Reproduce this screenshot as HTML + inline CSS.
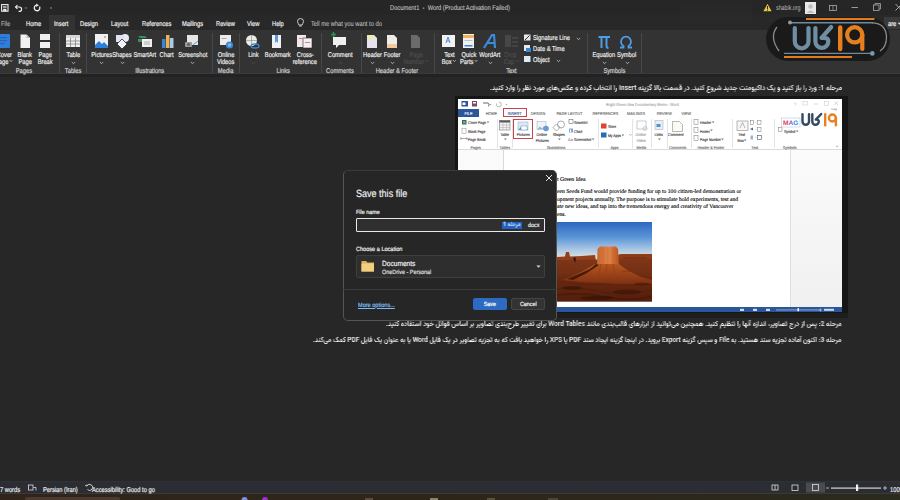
<!DOCTYPE html>
<html><head><meta charset="utf-8">
<style>
*{margin:0;padding:0;box-sizing:border-box}
html,body{text-rendering:geometricPrecision;width:900px;height:500px;overflow:hidden;background:#272727;font-family:"Liberation Sans",sans-serif;color:#e6e6e6}
.a{position:absolute}
svg{position:absolute;overflow:visible}
.t{position:absolute;white-space:nowrap;font-size:7px;line-height:8px;color:#ececec;-webkit-text-stroke:.2px currentColor;transform:scaleX(.82);transform-origin:0 0}
.c{position:absolute;width:60px;text-align:center;white-space:nowrap;font-size:7px;line-height:8px;color:#ececec;-webkit-text-stroke:.2px currentColor}
.c span{display:inline-block;transform:scaleX(.82)}
.g{color:#d0d0d0}
.dis{color:#4c4c4c}
.sep{position:absolute;top:33px;width:1px;height:40px;background:#474747}

</style></head><body>
<div class="a" style="left:0;top:0;width:900px;height:15px;background:#262626"></div>
<div class="a" style="left:0;top:15px;width:900px;height:15px;background:#282828"></div>
<div class="a" style="left:0;top:30px;width:900px;height:43px;background:#333"></div>
<div class="a" style="left:0;top:73px;width:900px;height:1px;background:#3a3a3a"></div>
<div class="a" style="left:0;top:74px;width:900px;height:3px;background:#222"></div>
<div class="a" style="left:0;top:77px;width:900px;height:404px;background:#272727"></div>
<div class="a" style="left:680px;top:3px;width:72px;height:18px;background:rgba(255,255,255,.012)"></div><!-- ghost -->
<!-- QAT -->
<svg style="left:0;top:0" width="60" height="15">
 <rect x="1.6" y="4.6" width="6.4" height="6.6" fill="none" stroke="#eee" stroke-width="1.1"/>
 <rect x="3" y="6.4" width="3.6" height="1.2" fill="#eee"/>
 <rect x="3.2" y="8.8" width="3.2" height="2.4" fill="#eee"/>
 <path d="M15.8 7 h3.6 a2.2 2.2 0 0 1 0 4.4 h-0.8" fill="none" stroke="#eee" stroke-width="1.2"/>
 <path d="M17.4 5.2 L15.6 7 L17.4 8.8" fill="none" stroke="#eee" stroke-width="1.2"/>
 <ellipse cx="26" cy="8" rx="1.6" ry="0.9" fill="#555"/>
 <path d="M39.5 6.6 A2.8 2.8 0 1 1 36.6 5.2" fill="none" stroke="#eee" stroke-width="1.3"/>
 <path d="M36.2 3.5 L38.9 5.2 L36.2 6.9z" fill="#eee"/>
 <ellipse cx="51" cy="8" rx="0.9" ry="1.1" fill="#777"/>
</svg>
<div class="t" style="left:390px;top:5.3px;color:#c4c4c4;-webkit-text-stroke:.1px currentColor">Document1&nbsp; - &nbsp;Word (Product Activation Failed)</div>
<!-- right of title bar -->
<svg style="left:760px;top:0" width="140" height="15">
 <path d="M7.5 3.8 L11.6 11.2 H3.4 Z" fill="#e9c24a"/>
 <rect x="7" y="6" width="1" height="3" fill="#3a2a00"/>
 <rect x="7" y="9.6" width="1" height="1" fill="#3a2a00"/>
 <rect x="45" y="2" width="11" height="12" fill="#e8e8e8"/>
 <circle cx="50.5" cy="6.5" r="2.2" fill="#bdbdbd"/>
 <path d="M46.5 13 q4 -5 8 0z" fill="#bdbdbd"/>
 <rect x="69.5" y="5.5" width="7" height="5" fill="none" stroke="#a8a8a8" stroke-width="0.8"/>
 <line x1="73" y1="5.5" x2="73" y2="10.5" stroke="#a8a8a8" stroke-width="0.7"/>
 <line x1="91.5" y1="7.5" x2="98" y2="7.5" stroke="#a8a8a8" stroke-width="0.9"/>
 <rect x="113.5" y="5" width="5.5" height="5.5" fill="none" stroke="#a8a8a8" stroke-width="0.8"/>
 <path d="M115 5 v-1.5 h5.5 v5.5 h-1.5" fill="none" stroke="#a8a8a8" stroke-width="0.8"/>
 <path d="M135.5 4 l6.5 6.5 M142 4 l-6.5 6.5" stroke="#b8b8b8" stroke-width="0.9"/>
</svg>
<div class="t" style="left:776px;top:4.8px;color:#bdbdbd;-webkit-text-stroke:0;transform:scaleX(.76)">shabik.org</div>
<!-- tabs -->
<div class="a" style="left:49px;top:15px;width:26px;height:15px;background:#333"></div>
<div class="t" style="left:1px;top:20.6px;color:#a0a0a0">File</div>
<div class="t" style="left:26px;top:20.6px">Home</div>
<div class="t" style="left:54px;top:20.6px">Insert</div>
<div class="t" style="left:80px;top:20.6px">Design</div>
<div class="t" style="left:111px;top:20.6px">Layout</div>
<div class="t" style="left:142px;top:20.6px">References</div>
<div class="t" style="left:182px;top:20.6px">Mailings</div>
<div class="t" style="left:216px;top:20.6px">Review</div>
<div class="t" style="left:247px;top:20.6px">View</div>
<div class="t" style="left:272px;top:20.6px">Help</div>
<svg style="left:295px;top:15px" width="12" height="15">
 <path d="M5.5 3.5 a3 3 0 0 1 3 3 c0 1.5 -1.2 2 -1.4 3.5 h-3.2 c-0.2 -1.5 -1.4 -2 -1.4 -3.5 a3 3 0 0 1 3 -3z" fill="none" stroke="#ddd" stroke-width="0.9"/>
 <line x1="4.2" y1="11" x2="6.8" y2="11" stroke="#ddd" stroke-width="0.9"/>
</svg>
<div class="t" style="left:311px;top:20.6px;color:#bdbdbd;-webkit-text-stroke:.1px currentColor">Tell me what you want to do</div>
<!-- share button remnant -->
<div class="a" style="left:884px;top:17px;width:16px;height:12px;background:#3a3a3a"></div>
<div class="t" style="left:888px;top:20.6px;color:#f0f0f0">are</div><svg style="left:897px;top:22px" width="5" height="4"><path d="M0.5 0.8 h4 l-2 2z" fill="#e0e0e0"/></svg>
<div class="sep" style="left:59px"></div>
<div class="sep" style="left:86px"></div>
<div class="sep" style="left:212px"></div>
<div class="sep" style="left:239px"></div>
<div class="sep" style="left:321px"></div>
<div class="sep" style="left:361px"></div>
<div class="sep" style="left:434px"></div>
<div class="sep" style="left:587px"></div>
<div class="sep" style="left:641px"></div>
<div class="c " style="left:-26px;top:51.8px"><span>Cover</span></div>
<div class="c " style="left:-26px;top:58.8px"><span>Page<svg width="5" height="4" style="position:static;display:inline-block;vertical-align:1px;margin-left:1px"><path d="M0.8 1 L2.5 2.7 L4.2 1" stroke="#c8c8c8" fill="none" stroke-width="0.8"/></svg></span></div>
<div class="c " style="left:-5px;top:51.8px"><span>Blank</span></div>
<div class="c " style="left:-5px;top:58.8px"><span>Page</span></div>
<div class="c " style="left:15px;top:51.8px"><span>Page</span></div>
<div class="c " style="left:15px;top:58.8px"><span>Break</span></div>
<div class="c g" style="left:-6px;top:68.2px"><span>Pages</span></div>
<div class="c " style="left:43px;top:51.8px"><span>Table</span></div>
<svg style="left:70.5px;top:61.3px" width="5" height="4"><path d="M0.8 1 L2.5 2.7 L4.2 1" stroke="#c8c8c8" fill="none" stroke-width="0.8"/></svg>
<div class="c g" style="left:43px;top:68.2px"><span>Tables</span></div>
<div class="c " style="left:71.5px;top:51.8px"><span>Pictures</span></div>
<svg style="left:99.0px;top:61.3px" width="5" height="4"><path d="M0.8 1 L2.5 2.7 L4.2 1" stroke="#c8c8c8" fill="none" stroke-width="0.8"/></svg>
<div class="c " style="left:92px;top:51.8px"><span>Shapes</span></div>
<svg style="left:119.5px;top:61.3px" width="5" height="4"><path d="M0.8 1 L2.5 2.7 L4.2 1" stroke="#c8c8c8" fill="none" stroke-width="0.8"/></svg>
<div class="c " style="left:115px;top:51.8px"><span>SmartArt</span></div>
<div class="c " style="left:137px;top:51.8px"><span>Chart</span></div>
<div class="c " style="left:162.5px;top:51.8px"><span>Screenshot</span></div>
<svg style="left:190.0px;top:61.3px" width="5" height="4"><path d="M0.8 1 L2.5 2.7 L4.2 1" stroke="#c8c8c8" fill="none" stroke-width="0.8"/></svg>
<div class="c g" style="left:120px;top:68.2px"><span>Illustrations</span></div>
<div class="c " style="left:196px;top:51.8px"><span>Online</span></div>
<div class="c " style="left:196px;top:58.8px"><span>Videos</span></div>
<div class="c g" style="left:196px;top:68.2px"><span>Media</span></div>
<div class="c " style="left:223px;top:51.8px"><span>Link</span></div>
<svg style="left:250.5px;top:61.3px" width="5" height="4"><path d="M0.8 1 L2.5 2.7 L4.2 1" stroke="#4c4c4c" fill="none" stroke-width="0.8"/></svg>
<div class="c " style="left:247.5px;top:51.8px"><span>Bookmark</span></div>
<div class="c " style="left:275px;top:51.8px"><span>Cross-</span></div>
<div class="c " style="left:275px;top:58.8px"><span>reference</span></div>
<div class="c g" style="left:253px;top:68.2px"><span>Links</span></div>
<div class="c " style="left:310px;top:51.8px"><span>Comment</span></div>
<svg style="left:337.5px;top:61.3px" width="5" height="4"><path d="M0.8 1 L2.5 2.7 L4.2 1" stroke="#4c4c4c" fill="none" stroke-width="0.8"/></svg>
<div class="c g" style="left:310px;top:68.2px"><span>Comments</span></div>
<div class="c " style="left:342px;top:51.8px"><span>Header</span></div>
<svg style="left:369.5px;top:61.3px" width="5" height="4"><path d="M0.8 1 L2.5 2.7 L4.2 1" stroke="#c8c8c8" fill="none" stroke-width="0.8"/></svg>
<div class="c " style="left:362px;top:51.8px"><span>Footer</span></div>
<svg style="left:389.5px;top:61.3px" width="5" height="4"><path d="M0.8 1 L2.5 2.7 L4.2 1" stroke="#c8c8c8" fill="none" stroke-width="0.8"/></svg>
<div class="c dis" style="left:386px;top:51.8px"><span>Page</span></div>
<div class="c dis" style="left:386px;top:58.8px"><span>Number<svg width="5" height="4" style="position:static;display:inline-block;vertical-align:1px;margin-left:1px"><path d="M0.8 1 L2.5 2.7 L4.2 1" stroke="#4c4c4c" fill="none" stroke-width="0.8"/></svg></span></div>
<div class="c g" style="left:367px;top:68.2px"><span>Header &amp; Footer</span></div>
<div class="c " style="left:419px;top:51.8px"><span>Text</span></div>
<div class="c " style="left:419px;top:58.8px"><span>Box<svg width="5" height="4" style="position:static;display:inline-block;vertical-align:1px;margin-left:1px"><path d="M0.8 1 L2.5 2.7 L4.2 1" stroke="#c8c8c8" fill="none" stroke-width="0.8"/></svg></span></div>
<div class="c " style="left:439px;top:51.8px"><span>Quick</span></div>
<div class="c " style="left:439px;top:58.8px"><span>Parts<svg width="5" height="4" style="position:static;display:inline-block;vertical-align:1px;margin-left:1px"><path d="M0.8 1 L2.5 2.7 L4.2 1" stroke="#c8c8c8" fill="none" stroke-width="0.8"/></svg></span></div>
<div class="c " style="left:460px;top:51.8px"><span>WordArt</span></div>
<svg style="left:487.5px;top:61.3px" width="5" height="4"><path d="M0.8 1 L2.5 2.7 L4.2 1" stroke="#c8c8c8" fill="none" stroke-width="0.8"/></svg>
<div class="c dis" style="left:481px;top:51.8px"><span>Drop</span></div>
<div class="c dis" style="left:481px;top:58.8px"><span>Cap<svg width="5" height="4" style="position:static;display:inline-block;vertical-align:1px;margin-left:1px"><path d="M0.8 1 L2.5 2.7 L4.2 1" stroke="#4c4c4c" fill="none" stroke-width="0.8"/></svg></span></div>
<div class="c g" style="left:481.5px;top:68.2px"><span>Text</span></div>
<div class="c " style="left:574px;top:51.8px"><span>Equation</span></div>
<svg style="left:601.5px;top:61.3px" width="5" height="4"><path d="M0.8 1 L2.5 2.7 L4.2 1" stroke="#c8c8c8" fill="none" stroke-width="0.8"/></svg>
<div class="c " style="left:597px;top:51.8px"><span>Symbol</span></div>
<svg style="left:624.5px;top:61.3px" width="5" height="4"><path d="M0.8 1 L2.5 2.7 L4.2 1" stroke="#c8c8c8" fill="none" stroke-width="0.8"/></svg>
<div class="c g" style="left:584px;top:68.2px"><span>Symbols</span></div>
<div class="t" style="left:533px;top:35px">Signature Line</div>
<div class="t" style="left:533px;top:46px">Date &amp; Time</div>
<div class="t" style="left:533px;top:57px">Object</div>
<svg style="left:575.5px;top:37px" width="5" height="4"><path d="M0.8 1 L2.5 2.7 L4.2 1" stroke="#c8c8c8" fill="none" stroke-width="0.8"/></svg>
<svg style="left:555.5px;top:59px" width="5" height="4"><path d="M0.8 1 L2.5 2.7 L4.2 1" stroke="#c8c8c8" fill="none" stroke-width="0.8"/></svg>

<svg style="left:0;top:0" width="650" height="75">
 <!-- cover page -->
 <rect x="-4" y="34" width="14" height="14" rx="1" fill="#2f7fd8"/>
 <rect x="-2" y="37" width="9" height="1.2" fill="#2a64b8"/>
 <rect x="-2" y="40" width="9" height="1.2" fill="#2a64b8"/>
 <rect x="-2" y="43" width="7" height="1.2" fill="#2a64b8"/>
 <!-- blank page -->
 <path d="M20.5 34.5 h6 l3.5 3.5 v10 h-9.5z" fill="#f2f2f2"/>
 <path d="M26.5 34.5 v3.5 h3.5" fill="#bdbdbd"/>
 <!-- page break -->
 <rect x="40" y="34" width="10" height="6" fill="#f0f0f0"/>
 <rect x="40" y="42" width="10" height="6" fill="#f0f0f0"/>
 <!-- table -->
 <rect x="66" y="35" width="14" height="12" fill="#efefef"/>
 <rect x="66" y="35" width="14" height="3" fill="#d6d6d6"/>
 <path d="M66 41 h14 M66 44 h14 M70.5 38 v9 M75.5 38 v9" stroke="#777" stroke-width="0.7"/>
 <!-- pictures -->
 <rect x="95" y="34" width="13" height="14" fill="#eef2f5"/>
 <path d="M95 48 v-3 l4 -4 l3 3 l2 -2 l4 4 v2z" fill="#2f7fd8"/>
 <circle cx="105" cy="37" r="1" fill="#e88b6a"/>
 <!-- shapes -->
 <circle cx="125" cy="38" r="4" fill="#eaeaf5"/>
 <rect x="116" y="35" width="8" height="7" fill="#dfe2f4"/>
 <path d="M122 39 l5 5 l-5 5 l-5 -5z" fill="#f2f2fa" stroke="#2e2e2e" stroke-width="0.8"/>
 <!-- smartart -->
 <path d="M138 36 h7 l2 2 h-7z" fill="#3c8e63"/>
 <path d="M138 39 h4 v3 h-4z" fill="#3c8e63"/>
 <rect x="142" y="39" width="10" height="8" fill="#f0f0f0"/>
 <rect x="144" y="41" width="6" height="4" fill="#cfcfcf"/>
 <!-- chart -->
 <rect x="162" y="39" width="3.5" height="9" fill="#3a86d4"/>
 <rect x="166" y="35" width="3.5" height="13" fill="#e8b455"/>
 <rect x="170" y="38" width="3.5" height="10" fill="#a9c9e8"/>
 <!-- screenshot -->
 <rect x="187" y="35" width="11" height="10" fill="#e6e6e6"/>
 <path d="M193 45 l5 -4" stroke="#2f7fd8" stroke-width="0.8"/>
 <rect x="185" y="42" width="7" height="5" rx="0.8" fill="#9a9a9a"/>
 <circle cx="188.5" cy="44.5" r="1.3" fill="#555"/>
 <!-- online videos -->
 <rect x="220" y="35" width="11" height="10" fill="#ececec"/>
 <rect x="221.5" y="38" width="5" height="1" fill="#aaa"/>
 <circle cx="229.5" cy="45" r="3.6" fill="#3a86d4"/>
 <circle cx="229.5" cy="45" r="1.8" fill="#7fb4ea"/>
 <!-- link -->
 <circle cx="251.5" cy="40.5" r="5.5" fill="#ecebe6"/>
 <path d="M246 40.5 h11 M251.5 35 v11" stroke="#8a8a8a" stroke-width="0.6"/>
 <ellipse cx="255" cy="46" rx="4" ry="2" fill="none" stroke="#3a86d4" stroke-width="1.3"/>
 <!-- bookmark -->
 <rect x="272" y="35" width="9" height="13" fill="#eef2f6"/>
 <path d="M275 35 v8 l1.5 -1.5 l1.5 1.5 v-8z" fill="#5f9ad8"/>
 <!-- cross reference -->
 <rect x="297" y="35" width="9" height="12" fill="#f3e7ee"/>
 <rect x="303" y="38" width="9" height="10" fill="#f6eef2" stroke="#2e2e2e" stroke-width="0.6"/>
 <rect x="299" y="38" width="5" height="1" fill="#c9829f"/>
 <rect x="305" y="42" width="5" height="1" fill="#c9829f"/>
 <!-- comment -->
 <path d="M333 37 h13 v8 h-7 l-3 3 v-3 h-3z" fill="#f0f0f0"/>
 <path d="M331 34.5 h5 M333.5 32 v5" stroke="#2f8d5c" stroke-width="1.6"/>
 <!-- header -->
 <path d="M367 35 h7 l3 3 v10 h-10z" fill="#e7e4ee"/>
 <rect x="367" y="35" width="7" height="4" fill="#efe8b0"/>
 <!-- footer -->
 <path d="M387 35 h7 l3 3 v10 h-10z" fill="#f0ece8"/>
 <rect x="387" y="44" width="10" height="4" fill="#f0c99e"/>
 <!-- page number disabled -->
 <path d="M411 35 h6 l3 3 v10 h-9z" fill="#6b6b6b"/>
 <!-- text box -->
 <rect x="442" y="35" width="13" height="12" fill="#f2f2f2"/>
 <path d="M446 43 l2 -6 l2 6 M446.8 41 h2.4" stroke="#3a86d4" stroke-width="0.9" fill="none"/>
 <!-- quick parts -->
 <rect x="463" y="34" width="11" height="14" fill="#f2f2f2"/>
 <rect x="463" y="35" width="11" height="3" fill="#f0b45a"/>
 <rect x="464.5" y="40" width="8" height="1" fill="#c0c0c0"/>
 <rect x="464.5" y="45" width="8" height="1.5" fill="#3a86d4"/>
 <!-- wordart -->
 <path d="M484 48 l8 -13 l2 0 l1 13 M487 43 h7" stroke="#3e8ad8" stroke-width="2.2" fill="none"/>
 <!-- drop cap disabled -->
 <rect x="505" y="35" width="6" height="12" fill="#474747"/>
 <rect x="512" y="37" width="6" height="2" fill="#444"/><rect x="512" y="41" width="6" height="2" fill="#444"/><rect x="512" y="45" width="6" height="2" fill="#444"/>
 <!-- small buttons icons -->
 <rect x="524" y="34.5" width="6.5" height="6" fill="#e8e8e8"/>
 <path d="M525 40 l4.5 -4.5" stroke="#2e2e2e" stroke-width="1"/>
 <rect x="524" y="45" width="6" height="6" fill="#e8e8e8"/>
 <rect x="526" y="48" width="5" height="4" fill="#3a86d4"/>
 <rect x="524" y="56" width="6.5" height="6" fill="#dfeaf5"/>
 <!-- pi -->
 <path d="M598.5 37 h11.5 M601.5 37 v11 M606.5 37 v9 q0 2 2 2" stroke="#4d9de8" stroke-width="2" fill="none"/>
 <!-- omega -->
 <path d="M620 47.5 h3.5 v-1.5 a5 5 0 1 1 5 0 v1.5 h3.5" stroke="#4d9de8" stroke-width="1.8" fill="none"/>
</svg>
<svg style="left:760px;top:12px" width="140" height="56">
 <rect x="6" y="5" width="124" height="44" rx="22" fill="#1a1a1a"/>
 <path d="M17 15 Q9 25 19 39" fill="none" stroke="#8c8c8c" stroke-width="1.3"/>
 <path d="M112 10.8 Q126 11 126.5 25 Q126.5 35 120 39" fill="none" stroke="#8a8a8a" stroke-width="1.3"/>
 <line x1="46" y1="7" x2="114.5" y2="7" stroke="#e07b22" stroke-width="2"/>
 <line x1="30" y1="10.8" x2="113" y2="10.8" stroke="#6c8ba0" stroke-width="1.4"/>
 <circle cx="30" cy="10.5" r="2" fill="#8d9aa3"/>
 <line x1="24" y1="41.4" x2="112" y2="41.4" stroke="#6c8ba0" stroke-width="1.4"/>
 <circle cx="112.3" cy="41.4" r="2.3" fill="#7d98aa"/>
 <line x1="24" y1="45" x2="92" y2="45" stroke="#e07b22" stroke-width="2"/>
 <path d="M34.8 16 V29.5 A6.85 6.85 0 0 0 48.5 29.5 V16" fill="none" stroke="#6f8ea3" stroke-width="4.2" stroke-linecap="round"/>
 <path d="M55.4 16 V29.5 A6.45 6.45 0 0 0 68.3 29.5 Q68.3 25.2 61.5 25.9 L71.2 15" fill="none" stroke="#6f8ea3" stroke-width="4.2" stroke-linecap="round" stroke-linejoin="round"/>
 <path d="M80.2 15.5 V37" fill="none" stroke="#e6801e" stroke-width="4.4" stroke-linecap="round"/>
 <circle cx="94.7" cy="22.8" r="7.6" fill="none" stroke="#e6801e" stroke-width="4.2"/>
 <path d="M102.3 22.8 V37" fill="none" stroke="#e6801e" stroke-width="4.2" stroke-linecap="round"/>
</svg>
<div class='a' style='left:490px;top:82px;width:352px;height:12px;color:#fafafa'><svg width='352' height='12' viewBox='0 0 391 12' preserveAspectRatio='none' style='display:block'><path fill='currentColor' fill-opacity='0.25' d='M177 2h1v1h-1zM210 2h3v1h-3zM12 3h1v1h-1zM22 3h1v1h-1zM31 3h1v1h-1zM40 3h1v1h-1zM42 3h1v1h-1zM44 3h1v1h-1zM68 3h1v1h-1zM85 3h1v1h-1zM88 3h1v1h-1zM110 3h1v1h-1zM121 3h1v1h-1zM125 3h1v1h-1zM132 3h2v1h-2zM137 3h1v1h-1zM143 3h1v1h-1zM160 3h1v1h-1zM183 3h2v1h-2zM210 3h1v1h-1zM212 3h1v1h-1zM238 3h1v1h-1zM297 3h1v1h-1zM311 3h1v1h-1zM314 3h1v1h-1zM334 3h1v1h-1zM337 3h1v1h-1zM341 3h1v1h-1zM349 3h1v1h-1zM367 3h1v1h-1zM379 3h1v1h-1zM9 4h1v1h-1zM13 4h1v1h-1zM17 4h1v1h-1zM22 4h1v1h-1zM31 4h1v1h-1zM40 4h2v1h-2zM48 4h1v1h-1zM68 4h1v1h-1zM72 4h2v1h-2zM84 4h1v1h-1zM101 4h1v1h-1zM104 4h1v1h-1zM109 4h1v1h-1zM111 4h1v1h-1zM121 4h1v1h-1zM125 4h1v1h-1zM131 4h3v1h-3zM137 4h1v1h-1zM143 4h1v1h-1zM149 4h1v1h-1zM153 4h1v1h-1zM167 4h1v1h-1zM170 4h1v1h-1zM174 4h1v1h-1zM178 4h1v1h-1zM184 4h1v1h-1zM194 4h1v1h-1zM210 4h1v1h-1zM220 4h1v1h-1zM227 4h2v1h-2zM234 4h1v1h-1zM241 4h1v1h-1zM244 4h1v1h-1zM253 4h1v1h-1zM268 4h1v1h-1zM281 4h1v1h-1zM296 4h1v1h-1zM304 4h1v1h-1zM310 4h1v1h-1zM331 4h1v1h-1zM333 4h1v1h-1zM341 4h1v1h-1zM349 4h1v1h-1zM354 4h1v1h-1zM367 4h1v1h-1zM375 4h1v1h-1zM379 4h1v1h-1zM5 5h1v1h-1zM7 5h2v1h-2zM10 5h1v1h-1zM14 5h1v1h-1zM22 5h1v1h-1zM24 5h1v1h-1zM27 5h1v1h-1zM31 5h1v1h-1zM44 5h2v1h-2zM56 5h1v1h-1zM60 5h1v1h-1zM65 5h1v1h-1zM68 5h1v1h-1zM70 5h1v1h-1zM81 5h3v1h-3zM87 5h1v1h-1zM97 5h1v1h-1zM100 5h1v1h-1zM112 5h1v1h-1zM121 5h1v1h-1zM123 5h1v1h-1zM127 5h1v1h-1zM130 5h1v1h-1zM133 5h1v1h-1zM137 5h1v1h-1zM143 5h1v1h-1zM147 5h1v1h-1zM149 5h1v1h-1zM152 5h1v1h-1zM160 5h1v1h-1zM169 5h2v1h-2zM173 5h1v1h-1zM175 5h1v1h-1zM179 5h1v1h-1zM182 5h1v1h-1zM184 5h1v1h-1zM192 5h2v1h-2zM198 5h1v1h-1zM200 5h1v1h-1zM205 5h4v1h-4zM213 5h1v1h-1zM219 5h1v1h-1zM221 5h1v1h-1zM227 5h1v1h-1zM231 5h1v1h-1zM233 5h3v1h-3zM243 5h1v1h-1zM245 5h1v1h-1zM252 5h1v1h-1zM254 5h2v1h-2zM262 5h1v1h-1zM264 5h2v1h-2zM273 5h1v1h-1zM282 5h1v1h-1zM285 5h1v1h-1zM287 5h1v1h-1zM290 5h1v1h-1zM295 5h1v1h-1zM299 5h1v1h-1zM303 5h1v1h-1zM305 5h1v1h-1zM307 5h1v1h-1zM313 5h1v1h-1zM319 5h1v1h-1zM327 5h1v1h-1zM330 5h1v1h-1zM332 5h1v1h-1zM336 5h1v1h-1zM340 5h2v1h-2zM344 5h2v1h-2zM349 5h1v1h-1zM362 5h1v1h-1zM368 5h1v1h-1zM379 5h1v1h-1zM383 5h1v1h-1zM9 6h1v1h-1zM11 6h1v1h-1zM20 6h1v1h-1zM22 6h1v1h-1zM31 6h1v1h-1zM33 6h1v1h-1zM36 6h1v1h-1zM38 6h1v1h-1zM41 6h1v1h-1zM43 6h1v1h-1zM51 6h1v1h-1zM64 6h1v1h-1zM66 6h1v1h-1zM68 6h1v1h-1zM70 6h1v1h-1zM84 6h1v1h-1zM86 6h1v1h-1zM88 6h1v1h-1zM90 6h2v1h-2zM94 6h1v1h-1zM101 6h1v1h-1zM103 6h1v1h-1zM105 6h1v1h-1zM107 6h1v1h-1zM116 6h1v1h-1zM121 6h1v1h-1zM123 6h2v1h-2zM128 6h2v1h-2zM137 6h1v1h-1zM139 6h1v1h-1zM143 6h1v1h-1zM147 6h1v1h-1zM149 6h2v1h-2zM157 6h1v1h-1zM160 6h1v1h-1zM164 6h1v1h-1zM166 6h1v1h-1zM173 6h2v1h-2zM190 6h1v1h-1zM197 6h1v1h-1zM199 6h1v1h-1zM201 6h1v1h-1zM203 6h1v1h-1zM209 6h2v1h-2zM213 6h1v1h-1zM216 6h1v1h-1zM229 6h2v1h-2zM236 6h1v1h-1zM248 6h2v1h-2zM257 6h1v1h-1zM267 6h1v1h-1zM269 6h2v1h-2zM278 6h1v1h-1zM283 6h2v1h-2zM286 6h1v1h-1zM288 6h1v1h-1zM293 6h1v1h-1zM296 6h1v1h-1zM298 6h1v1h-1zM307 6h1v1h-1zM312 6h1v1h-1zM315 6h1v1h-1zM322 6h1v1h-1zM329 6h1v1h-1zM331 6h1v1h-1zM333 6h1v1h-1zM335 6h1v1h-1zM343 6h1v1h-1zM349 6h2v1h-2zM357 6h1v1h-1zM368 6h1v1h-1zM373 6h1v1h-1zM377 6h1v1h-1zM379 6h2v1h-2zM384 6h1v1h-1zM387 6h1v1h-1zM389 6h1v1h-1zM14 7h1v1h-1zM22 7h1v1h-1zM24 7h1v1h-1zM31 7h1v1h-1zM36 7h1v1h-1zM45 7h1v1h-1zM53 7h1v1h-1zM60 7h1v1h-1zM64 7h1v1h-1zM68 7h1v1h-1zM75 7h1v1h-1zM92 7h1v1h-1zM103 7h1v1h-1zM107 7h1v1h-1zM112 7h1v1h-1zM115 7h1v1h-1zM121 7h1v1h-1zM133 7h1v1h-1zM137 7h1v1h-1zM139 7h1v1h-1zM143 7h1v1h-1zM147 7h1v1h-1zM149 7h1v1h-1zM153 7h1v1h-1zM174 7h1v1h-1zM179 7h1v1h-1zM185 7h2v1h-2zM213 7h1v1h-1zM216 7h1v1h-1zM221 7h1v1h-1zM225 7h1v1h-1zM248 7h2v1h-2zM273 7h1v1h-1zM277 7h1v1h-1zM290 7h1v1h-1zM305 7h1v1h-1zM322 7h1v1h-1zM345 7h1v1h-1zM349 7h2v1h-2zM359 7h1v1h-1zM368 7h1v1h-1zM373 7h1v1h-1zM6 8h2v1h-2zM20 8h1v1h-1zM22 8h1v1h-1zM25 8h1v1h-1zM27 8h1v1h-1zM33 8h1v1h-1zM51 8h1v1h-1zM53 8h1v1h-1zM64 8h1v1h-1zM66 8h1v1h-1zM75 8h1v1h-1zM77 8h1v1h-1zM80 8h1v1h-1zM118 8h1v1h-1zM170 8h3v1h-3zM188 8h1v1h-1zM229 8h3v1h-3zM240 8h1v1h-1zM242 8h1v1h-1zM246 8h1v1h-1zM248 8h1v1h-1zM263 8h2v1h-2zM272 8h1v1h-1zM291 8h1v1h-1zM294 8h2v1h-2zM314 8h3v1h-3zM320 8h1v1h-1zM328 8h2v1h-2zM341 8h1v1h-1zM344 8h1v1h-1zM357 8h1v1h-1zM359 8h1v1h-1zM386 8h1v1h-1zM19 9h1v1h-1zM21 9h1v1h-1zM24 9h1v1h-1zM26 9h1v1h-1zM35 9h1v1h-1zM37 9h1v1h-1zM50 9h1v1h-1zM52 9h1v1h-1zM63 9h1v1h-1zM67 9h1v1h-1zM76 9h1v1h-1zM106 9h1v1h-1zM108 9h1v1h-1zM117 9h2v1h-2zM138 9h1v1h-1zM140 9h1v1h-1zM170 9h1v1h-1zM175 9h1v1h-1zM188 9h2v1h-2zM229 9h1v1h-1zM231 9h1v1h-1zM247 9h1v1h-1zM271 9h2v1h-2zM290 9h1v1h-1zM293 9h1v1h-1zM295 9h1v1h-1zM314 9h1v1h-1zM316 9h1v1h-1zM321 9h1v1h-1zM330 9h1v1h-1zM343 9h2v1h-2zM356 9h1v1h-1zM358 9h1v1h-1z'/><path fill='currentColor' fill-opacity='0.50' d='M178 2h2v1h-2zM30 3h1v1h-1zM41 3h1v1h-1zM69 3h1v1h-1zM138 3h1v1h-1zM177 3h1v1h-1zM182 3h1v1h-1zM186 3h2v1h-2zM211 3h1v1h-1zM236 3h1v1h-1zM254 3h1v1h-1zM300 3h2v1h-2zM348 3h1v1h-1zM4 4h1v1h-1zM10 4h2v1h-2zM18 4h1v1h-1zM30 4h1v1h-1zM44 4h1v1h-1zM49 4h1v1h-1zM69 4h1v1h-1zM86 4h1v1h-1zM105 4h1v1h-1zM128 4h3v1h-3zM138 4h1v1h-1zM145 4h1v1h-1zM156 4h2v1h-2zM162 4h1v1h-1zM169 4h1v1h-1zM175 4h2v1h-2zM182 4h2v1h-2zM186 4h2v1h-2zM195 4h2v1h-2zM219 4h1v1h-1zM233 4h1v1h-1zM236 4h1v1h-1zM254 4h2v1h-2zM261 4h1v1h-1zM267 4h1v1h-1zM279 4h2v1h-2zM284 4h2v1h-2zM298 4h1v1h-1zM300 4h2v1h-2zM303 4h1v1h-1zM312 4h1v1h-1zM326 4h1v1h-1zM332 4h1v1h-1zM335 4h1v1h-1zM340 4h1v1h-1zM348 4h1v1h-1zM355 4h1v1h-1zM368 4h1v1h-1zM4 5h1v1h-1zM12 5h1v1h-1zM18 5h1v1h-1zM30 5h1v1h-1zM49 5h1v1h-1zM54 5h1v1h-1zM69 5h1v1h-1zM74 5h1v1h-1zM85 5h1v1h-1zM89 5h1v1h-1zM95 5h1v1h-1zM102 5h1v1h-1zM106 5h1v1h-1zM110 5h1v1h-1zM115 5h1v1h-1zM120 5h1v1h-1zM126 5h1v1h-1zM132 5h1v1h-1zM138 5h1v1h-1zM145 5h1v1h-1zM151 5h1v1h-1zM153 5h1v1h-1zM157 5h1v1h-1zM165 5h1v1h-1zM172 5h1v1h-1zM177 5h1v1h-1zM186 5h2v1h-2zM189 5h1v1h-1zM202 5h1v1h-1zM210 5h2v1h-2zM228 5h1v1h-1zM237 5h1v1h-1zM241 5h2v1h-2zM247 5h1v1h-1zM256 5h1v1h-1zM261 5h1v1h-1zM267 5h2v1h-2zM270 5h1v1h-1zM272 5h1v1h-1zM277 5h1v1h-1zM289 5h1v1h-1zM297 5h1v1h-1zM300 5h2v1h-2zM308 5h1v1h-1zM311 5h1v1h-1zM316 5h1v1h-1zM321 5h1v1h-1zM326 5h1v1h-1zM334 5h1v1h-1zM348 5h1v1h-1zM355 5h1v1h-1zM360 5h1v1h-1zM365 5h2v1h-2zM374 5h1v1h-1zM376 5h1v1h-1zM382 5h1v1h-1zM388 5h1v1h-1zM390 5h1v1h-1zM4 6h1v1h-1zM7 6h2v1h-2zM13 6h2v1h-2zM24 6h4v1h-4zM30 6h1v1h-1zM32 6h1v1h-1zM44 6h2v1h-2zM53 6h1v1h-1zM55 6h3v1h-3zM59 6h2v1h-2zM63 6h1v1h-1zM72 6h2v1h-2zM75 6h2v1h-2zM79 6h5v1h-5zM96 6h2v1h-2zM111 6h2v1h-2zM130 6h1v1h-1zM132 6h2v1h-2zM138 6h1v1h-1zM145 6h1v1h-1zM151 6h1v1h-1zM153 6h2v1h-2zM169 6h2v1h-2zM178 6h2v1h-2zM184 6h4v1h-4zM192 6h2v1h-2zM204 6h5v1h-5zM217 6h1v1h-1zM220 6h2v1h-2zM233 6h2v1h-2zM241 6h2v1h-2zM245 6h2v1h-2zM250 6h1v1h-1zM252 6h4v1h-4zM261 6h1v1h-1zM264 6h2v1h-2zM272 6h1v1h-1zM274 6h1v1h-1zM290 6h3v1h-3zM299 6h3v1h-3zM304 6h2v1h-2zM319 6h2v1h-2zM326 6h1v1h-1zM330 6h1v1h-1zM336 6h1v1h-1zM340 6h2v1h-2zM344 6h2v1h-2zM348 6h1v1h-1zM351 6h1v1h-1zM359 6h1v1h-1zM361 6h2v1h-2zM375 6h2v1h-2zM385 6h2v1h-2zM0 7h3v1h-3zM19 7h1v1h-1zM21 7h1v1h-1zM27 7h1v1h-1zM30 7h1v1h-1zM32 7h2v1h-2zM50 7h1v1h-1zM52 7h1v1h-1zM67 7h1v1h-1zM79 7h1v1h-1zM106 7h1v1h-1zM126 7h1v1h-1zM138 7h1v1h-1zM145 7h1v1h-1zM157 7h1v1h-1zM162 7h1v1h-1zM217 7h2v1h-2zM241 7h1v1h-1zM244 7h2v1h-2zM259 7h1v1h-1zM265 7h1v1h-1zM299 7h4v1h-4zM308 7h1v1h-1zM316 7h1v1h-1zM319 7h1v1h-1zM324 7h1v1h-1zM336 7h1v1h-1zM340 7h2v1h-2zM348 7h1v1h-1zM351 7h1v1h-1zM356 7h1v1h-1zM358 7h1v1h-1zM365 7h2v1h-2zM382 7h1v1h-1zM385 7h1v1h-1zM390 7h1v1h-1zM36 8h1v1h-1zM55 8h2v1h-2zM79 8h1v1h-1zM96 8h2v1h-2zM107 8h1v1h-1zM139 8h1v1h-1zM174 8h1v1h-1zM216 8h2v1h-2zM249 8h2v1h-2zM293 8h1v1h-1zM350 8h2v1h-2zM361 8h2v1h-2zM6 9h2v1h-2zM32 9h1v1h-1zM55 9h1v1h-1zM96 9h1v1h-1zM171 9h3v1h-3zM215 9h2v1h-2zM230 9h1v1h-1zM240 9h2v1h-2zM245 9h1v1h-1zM248 9h2v1h-2zM263 9h2v1h-2zM292 9h1v1h-1zM294 9h1v1h-1zM315 9h1v1h-1zM319 9h1v1h-1zM328 9h2v1h-2zM340 9h1v1h-1zM349 9h2v1h-2zM361 9h1v1h-1zM385 9h1v1h-1zM241 10h1v1h-1zM244 10h1v1h-1z'/><path fill='currentColor' fill-opacity='0.75' d='M13 3h2v1h-2zM23 3h1v1h-1zM39 3h1v1h-1zM86 3h2v1h-2zM111 3h2v1h-2zM122 3h1v1h-1zM134 3h1v1h-1zM144 3h1v1h-1zM161 3h1v1h-1zM178 3h2v1h-2zM185 3h1v1h-1zM237 3h1v1h-1zM298 3h2v1h-2zM312 3h2v1h-2zM335 3h2v1h-2zM342 3h1v1h-1zM368 3h2v1h-2zM378 3h1v1h-1zM12 4h1v1h-1zM23 4h1v1h-1zM39 4h1v1h-1zM85 4h1v1h-1zM110 4h1v1h-1zM122 4h1v1h-1zM134 4h1v1h-1zM144 4h1v1h-1zM146 4h3v1h-3zM150 4h3v1h-3zM154 4h2v1h-2zM159 4h2v1h-2zM177 4h1v1h-1zM185 4h1v1h-1zM212 4h1v1h-1zM235 4h1v1h-1zM242 4h2v1h-2zM297 4h1v1h-1zM311 4h1v1h-1zM334 4h1v1h-1zM342 4h1v1h-1zM369 4h1v1h-1zM378 4h1v1h-1zM13 5h1v1h-1zM19 5h1v1h-1zM23 5h1v1h-1zM25 5h2v1h-2zM39 5h2v1h-2zM42 5h1v1h-1zM50 5h1v1h-1zM55 5h1v1h-1zM58 5h2v1h-2zM66 5h2v1h-2zM71 5h1v1h-1zM86 5h1v1h-1zM91 5h1v1h-1zM96 5h1v1h-1zM105 5h1v1h-1zM111 5h1v1h-1zM122 5h1v1h-1zM124 5h2v1h-2zM134 5h1v1h-1zM144 5h1v1h-1zM146 5h1v1h-1zM148 5h1v1h-1zM150 5h1v1h-1zM154 5h3v1h-3zM158 5h1v1h-1zM161 5h1v1h-1zM166 5h2v1h-2zM178 5h1v1h-1zM183 5h1v1h-1zM185 5h1v1h-1zM212 5h1v1h-1zM220 5h1v1h-1zM236 5h1v1h-1zM246 5h1v1h-1zM271 5h1v1h-1zM291 5h2v1h-2zM298 5h1v1h-1zM304 5h1v1h-1zM312 5h1v1h-1zM320 5h1v1h-1zM335 5h1v1h-1zM342 5h1v1h-1zM356 5h1v1h-1zM361 5h1v1h-1zM369 5h1v1h-1zM378 5h1v1h-1zM380 5h2v1h-2zM5 6h1v1h-1zM10 6h1v1h-1zM19 6h1v1h-1zM21 6h1v1h-1zM23 6h1v1h-1zM37 6h1v1h-1zM39 6h2v1h-2zM42 6h1v1h-1zM50 6h1v1h-1zM52 6h1v1h-1zM54 6h1v1h-1zM58 6h1v1h-1zM65 6h1v1h-1zM69 6h1v1h-1zM71 6h1v1h-1zM74 6h1v1h-1zM87 6h1v1h-1zM89 6h1v1h-1zM95 6h1v1h-1zM100 6h1v1h-1zM102 6h1v1h-1zM106 6h1v1h-1zM108 6h1v1h-1zM115 6h1v1h-1zM120 6h1v1h-1zM122 6h1v1h-1zM126 6h1v1h-1zM134 6h1v1h-1zM140 6h1v1h-1zM144 6h1v1h-1zM146 6h1v1h-1zM148 6h1v1h-1zM152 6h1v1h-1zM158 6h1v1h-1zM161 6h1v1h-1zM165 6h1v1h-1zM167 6h1v1h-1zM172 6h1v1h-1zM175 6h1v1h-1zM183 6h1v1h-1zM189 6h1v1h-1zM198 6h1v1h-1zM200 6h1v1h-1zM202 6h1v1h-1zM211 6h1v1h-1zM228 6h1v1h-1zM231 6h1v1h-1zM237 6h1v1h-1zM247 6h1v1h-1zM256 6h1v1h-1zM262 6h1v1h-1zM268 6h1v1h-1zM277 6h1v1h-1zM282 6h1v1h-1zM285 6h1v1h-1zM287 6h1v1h-1zM289 6h1v1h-1zM295 6h1v1h-1zM308 6h1v1h-1zM313 6h1v1h-1zM316 6h1v1h-1zM321 6h1v1h-1zM327 6h1v1h-1zM332 6h1v1h-1zM342 6h1v1h-1zM356 6h1v1h-1zM358 6h1v1h-1zM360 6h1v1h-1zM369 6h1v1h-1zM374 6h1v1h-1zM378 6h1v1h-1zM382 6h1v1h-1zM388 6h1v1h-1zM390 6h1v1h-1zM5 7h7v1h-7zM17 7h2v1h-2zM23 7h1v1h-1zM37 7h2v1h-2zM43 7h2v1h-2zM48 7h2v1h-2zM54 7h1v1h-1zM58 7h2v1h-2zM63 7h1v1h-1zM65 7h1v1h-1zM69 7h2v1h-2zM74 7h1v1h-1zM76 7h1v1h-1zM82 7h3v1h-3zM87 7h2v1h-2zM90 7h2v1h-2zM95 7h1v1h-1zM97 7h1v1h-1zM100 7h1v1h-1zM102 7h1v1h-1zM104 7h2v1h-2zM108 7h2v1h-2zM117 7h2v1h-2zM120 7h1v1h-1zM122 7h2v1h-2zM125 7h1v1h-1zM127 7h6v1h-6zM134 7h1v1h-1zM140 7h1v1h-1zM144 7h1v1h-1zM146 7h1v1h-1zM148 7h1v1h-1zM150 7h3v1h-3zM154 7h3v1h-3zM158 7h1v1h-1zM161 7h1v1h-1zM165 7h1v1h-1zM167 7h2v1h-2zM170 7h3v1h-3zM175 7h2v1h-2zM182 7h1v1h-1zM184 7h1v1h-1zM187 7h3v1h-3zM193 7h1v1h-1zM195 7h6v1h-6zM203 7h1v1h-1zM205 7h8v1h-8zM219 7h2v1h-2zM224 7h1v1h-1zM226 7h1v1h-1zM228 7h5v1h-5zM234 7h2v1h-2zM237 7h1v1h-1zM251 7h1v1h-1zM253 7h4v1h-4zM262 7h3v1h-3zM266 7h1v1h-1zM268 7h2v1h-2zM272 7h1v1h-1zM279 7h6v1h-6zM286 7h2v1h-2zM289 7h1v1h-1zM293 7h5v1h-5zM303 7h2v1h-2zM310 7h2v1h-2zM313 7h3v1h-3zM327 7h3v1h-3zM331 7h4v1h-4zM342 7h3v1h-3zM354 7h2v1h-2zM360 7h1v1h-1zM362 7h1v1h-1zM369 7h1v1h-1zM374 7h2v1h-2zM377 7h1v1h-1zM379 7h1v1h-1zM387 7h2v1h-2zM21 8h1v1h-1zM26 8h1v1h-1zM32 8h1v1h-1zM37 8h1v1h-1zM52 8h1v1h-1zM63 8h1v1h-1zM67 8h1v1h-1zM76 8h1v1h-1zM108 8h1v1h-1zM140 8h1v1h-1zM175 8h1v1h-1zM241 8h1v1h-1zM247 8h1v1h-1zM292 8h1v1h-1zM321 8h1v1h-1zM340 8h1v1h-1zM358 8h1v1h-1zM385 8h1v1h-1zM20 9h1v1h-1zM25 9h1v1h-1zM31 9h1v1h-1zM36 9h1v1h-1zM51 9h1v1h-1zM54 9h1v1h-1zM64 9h1v1h-1zM66 9h1v1h-1zM77 9h1v1h-1zM79 9h1v1h-1zM95 9h1v1h-1zM107 9h1v1h-1zM139 9h1v1h-1zM174 9h1v1h-1zM246 9h1v1h-1zM291 9h1v1h-1zM320 9h1v1h-1zM339 9h1v1h-1zM357 9h1v1h-1zM360 9h1v1h-1zM384 9h1v1h-1z'/><path fill='currentColor' fill-opacity='1.00' d='M158 4h1v1h-1zM161 4h1v1h-1zM211 4h1v1h-1zM41 5h1v1h-1zM72 5h2v1h-2zM90 5h1v1h-1zM101 5h1v1h-1zM201 5h1v1h-1zM288 5h1v1h-1zM375 5h1v1h-1zM389 5h1v1h-1zM127 6h1v1h-1zM212 6h1v1h-1zM273 6h1v1h-1zM383 6h1v1h-1zM3 7h2v1h-2zM12 7h2v1h-2zM25 7h2v1h-2zM39 7h4v1h-4zM55 7h3v1h-3zM66 7h1v1h-1zM71 7h3v1h-3zM80 7h2v1h-2zM85 7h2v1h-2zM89 7h1v1h-1zM96 7h1v1h-1zM101 7h1v1h-1zM110 7h2v1h-2zM116 7h1v1h-1zM119 7h1v1h-1zM124 7h1v1h-1zM166 7h1v1h-1zM169 7h1v1h-1zM177 7h2v1h-2zM183 7h1v1h-1zM194 7h1v1h-1zM201 7h2v1h-2zM204 7h1v1h-1zM227 7h1v1h-1zM233 7h1v1h-1zM236 7h1v1h-1zM242 7h2v1h-2zM246 7h2v1h-2zM250 7h1v1h-1zM252 7h1v1h-1zM260 7h2v1h-2zM267 7h1v1h-1zM270 7h2v1h-2zM278 7h1v1h-1zM285 7h1v1h-1zM288 7h1v1h-1zM291 7h2v1h-2zM298 7h1v1h-1zM309 7h1v1h-1zM312 7h1v1h-1zM320 7h2v1h-2zM325 7h2v1h-2zM330 7h1v1h-1zM335 7h1v1h-1zM361 7h1v1h-1zM376 7h1v1h-1zM378 7h1v1h-1zM380 7h2v1h-2zM386 7h1v1h-1zM389 7h1v1h-1zM65 9h1v1h-1zM78 9h1v1h-1zM242 10h2v1h-2z'/></svg></div><div class='a' style='left:386px;top:318px;width:456px;height:12px;color:#fafafa'><svg width='456' height='12' viewBox='0 0 517 12' preserveAspectRatio='none' style='display:block'><path fill='currentColor' fill-opacity='0.25' d='M69 2h3v1h-3zM211 2h1v1h-1zM213 2h1v1h-1zM217 2h1v1h-1zM270 2h3v1h-3zM12 3h1v1h-1zM27 3h2v1h-2zM38 3h1v1h-1zM51 3h1v1h-1zM59 3h1v1h-1zM61 3h3v1h-3zM69 3h1v1h-1zM71 3h1v1h-1zM119 3h3v1h-3zM146 3h1v1h-1zM163 3h2v1h-2zM166 3h2v1h-2zM175 3h1v1h-1zM185 3h2v1h-2zM188 3h1v1h-1zM203 3h1v1h-1zM208 3h1v1h-1zM211 3h1v1h-1zM213 3h1v1h-1zM217 3h1v1h-1zM235 3h2v1h-2zM269 3h2v1h-2zM272 3h1v1h-1zM280 3h1v1h-1zM291 3h1v1h-1zM296 3h1v1h-1zM304 3h1v1h-1zM314 3h2v1h-2zM320 3h3v1h-3zM376 3h1v1h-1zM386 3h1v1h-1zM388 3h1v1h-1zM393 3h3v1h-3zM410 3h4v1h-4zM421 3h1v1h-1zM428 3h2v1h-2zM444 3h1v1h-1zM452 3h3v1h-3zM496 3h1v1h-1zM503 3h1v1h-1zM9 4h1v1h-1zM13 4h1v1h-1zM18 4h1v1h-1zM21 4h2v1h-2zM27 4h3v1h-3zM38 4h1v1h-1zM43 4h2v1h-2zM51 4h1v1h-1zM59 4h1v1h-1zM61 4h3v1h-3zM119 4h1v1h-1zM121 4h1v1h-1zM130 4h1v1h-1zM133 4h1v1h-1zM146 4h1v1h-1zM163 4h2v1h-2zM175 4h1v1h-1zM188 4h1v1h-1zM190 4h1v1h-1zM194 4h1v1h-1zM211 4h1v1h-1zM215 4h1v1h-1zM217 4h1v1h-1zM221 4h1v1h-1zM225 4h1v1h-1zM230 4h1v1h-1zM233 4h4v1h-4zM251 4h2v1h-2zM269 4h1v1h-1zM280 4h1v1h-1zM284 4h2v1h-2zM291 4h1v1h-1zM293 4h1v1h-1zM296 4h1v1h-1zM302 4h1v1h-1zM304 4h1v1h-1zM309 4h1v1h-1zM313 4h3v1h-3zM320 4h1v1h-1zM344 4h1v1h-1zM356 4h2v1h-2zM365 4h2v1h-2zM372 4h1v1h-1zM386 4h1v1h-1zM388 4h2v1h-2zM391 4h1v1h-1zM393 4h1v1h-1zM395 4h1v1h-1zM410 4h2v1h-2zM413 4h1v1h-1zM417 4h1v1h-1zM419 4h1v1h-1zM421 4h1v1h-1zM427 4h3v1h-3zM444 4h1v1h-1zM452 4h1v1h-1zM465 4h1v1h-1zM471 4h1v1h-1zM494 4h1v1h-1zM501 4h1v1h-1zM503 4h1v1h-1zM5 5h1v1h-1zM7 5h2v1h-2zM10 5h1v1h-1zM14 5h1v1h-1zM17 5h1v1h-1zM21 5h1v1h-1zM26 5h1v1h-1zM29 5h1v1h-1zM31 5h1v1h-1zM34 5h3v1h-3zM38 5h1v1h-1zM43 5h1v1h-1zM48 5h2v1h-2zM53 5h1v1h-1zM59 5h1v1h-1zM63 5h1v1h-1zM65 5h1v1h-1zM68 5h1v1h-1zM70 5h1v1h-1zM80 5h2v1h-2zM86 5h1v1h-1zM88 5h2v1h-2zM98 5h1v1h-1zM106 5h2v1h-2zM110 5h1v1h-1zM120 5h2v1h-2zM126 5h1v1h-1zM132 5h1v1h-1zM134 5h1v1h-1zM136 5h2v1h-2zM142 5h1v1h-1zM146 5h1v1h-1zM150 5h1v1h-1zM157 5h1v1h-1zM160 5h1v1h-1zM168 5h1v1h-1zM180 5h1v1h-1zM184 5h1v1h-1zM190 5h1v1h-1zM196 5h2v1h-2zM199 5h1v1h-1zM213 5h1v1h-1zM224 5h1v1h-1zM232 5h2v1h-2zM239 5h1v1h-1zM249 5h1v1h-1zM251 5h1v1h-1zM255 5h1v1h-1zM258 5h1v1h-1zM264 5h1v1h-1zM269 5h1v1h-1zM271 5h1v1h-1zM282 5h1v1h-1zM287 5h1v1h-1zM291 5h1v1h-1zM296 5h1v1h-1zM302 5h1v1h-1zM304 5h1v1h-1zM312 5h1v1h-1zM315 5h1v1h-1zM317 5h1v1h-1zM321 5h1v1h-1zM329 5h1v1h-1zM337 5h1v1h-1zM341 5h1v1h-1zM343 5h3v1h-3zM348 5h2v1h-2zM351 5h1v1h-1zM359 5h1v1h-1zM365 5h1v1h-1zM369 5h1v1h-1zM371 5h3v1h-3zM382 5h1v1h-1zM384 5h3v1h-3zM390 5h1v1h-1zM392 5h1v1h-1zM394 5h1v1h-1zM410 5h1v1h-1zM413 5h1v1h-1zM416 5h1v1h-1zM420 5h2v1h-2zM426 5h1v1h-1zM439 5h1v1h-1zM444 5h1v1h-1zM452 5h2v1h-2zM457 5h1v1h-1zM461 5h1v1h-1zM472 5h1v1h-1zM483 5h2v1h-2zM487 5h2v1h-2zM492 5h1v1h-1zM494 5h1v1h-1zM496 5h1v1h-1zM499 5h1v1h-1zM503 5h1v1h-1zM505 5h1v1h-1zM509 5h1v1h-1zM513 5h1v1h-1zM9 6h1v1h-1zM11 6h1v1h-1zM18 6h1v1h-1zM20 6h1v1h-1zM22 6h1v1h-1zM26 6h1v1h-1zM30 6h1v1h-1zM44 6h1v1h-1zM47 6h1v1h-1zM50 6h2v1h-2zM54 6h1v1h-1zM56 6h1v1h-1zM59 6h1v1h-1zM72 6h1v1h-1zM75 6h1v1h-1zM77 6h1v1h-1zM79 6h1v1h-1zM85 6h1v1h-1zM87 6h1v1h-1zM97 6h2v1h-2zM113 6h1v1h-1zM117 6h1v1h-1zM119 6h2v1h-2zM125 6h1v1h-1zM127 6h1v1h-1zM133 6h1v1h-1zM135 6h1v1h-1zM138 6h1v1h-1zM142 6h1v1h-1zM146 6h1v1h-1zM148 6h2v1h-2zM155 6h1v1h-1zM158 6h1v1h-1zM161 6h2v1h-2zM168 6h1v1h-1zM170 6h1v1h-1zM172 6h1v1h-1zM175 6h1v1h-1zM177 6h1v1h-1zM180 6h1v1h-1zM184 6h1v1h-1zM187 6h1v1h-1zM190 6h1v1h-1zM196 6h2v1h-2zM199 6h1v1h-1zM207 6h1v1h-1zM209 6h1v1h-1zM213 6h1v1h-1zM219 6h1v1h-1zM222 6h2v1h-2zM225 6h1v1h-1zM229 6h1v1h-1zM231 6h1v1h-1zM238 6h1v1h-1zM240 6h1v1h-1zM242 6h1v1h-1zM244 6h1v1h-1zM246 6h1v1h-1zM253 6h2v1h-2zM263 6h1v1h-1zM265 6h1v1h-1zM267 6h1v1h-1zM269 6h1v1h-1zM273 6h1v1h-1zM275 6h1v1h-1zM277 6h1v1h-1zM282 6h1v1h-1zM288 6h1v1h-1zM291 6h2v1h-2zM301 6h1v1h-1zM304 6h1v1h-1zM308 6h1v1h-1zM310 6h2v1h-2zM320 6h2v1h-2zM324 6h1v1h-1zM328 6h1v1h-1zM330 6h1v1h-1zM332 6h1v1h-1zM335 6h1v1h-1zM337 6h1v1h-1zM340 6h1v1h-1zM347 6h1v1h-1zM350 6h1v1h-1zM352 6h1v1h-1zM354 6h1v1h-1zM367 6h2v1h-2zM374 6h1v1h-1zM379 6h1v1h-1zM381 6h1v1h-1zM386 6h1v1h-1zM388 6h2v1h-2zM391 6h1v1h-1zM393 6h2v1h-2zM400 6h1v1h-1zM406 6h1v1h-1zM409 6h2v1h-2zM413 6h1v1h-1zM417 6h1v1h-1zM419 6h1v1h-1zM433 6h1v1h-1zM436 6h1v1h-1zM439 6h1v1h-1zM442 6h1v1h-1zM444 6h1v1h-1zM446 6h1v1h-1zM450 6h1v1h-1zM452 6h2v1h-2zM458 6h1v1h-1zM463 6h1v1h-1zM468 6h1v1h-1zM471 6h1v1h-1zM478 6h1v1h-1zM482 6h1v1h-1zM493 6h1v1h-1zM495 6h1v1h-1zM500 6h1v1h-1zM502 6h1v1h-1zM506 6h2v1h-2zM510 6h1v1h-1zM512 6h1v1h-1zM516 6h1v1h-1zM14 7h1v1h-1zM23 7h2v1h-2zM38 7h1v1h-1zM45 7h1v1h-1zM59 7h1v1h-1zM63 7h1v1h-1zM65 7h1v1h-1zM75 7h1v1h-1zM77 7h1v1h-1zM83 7h1v1h-1zM107 7h1v1h-1zM111 7h1v1h-1zM121 7h1v1h-1zM125 7h1v1h-1zM137 7h1v1h-1zM150 7h1v1h-1zM172 7h1v1h-1zM175 7h1v1h-1zM194 7h1v1h-1zM196 7h1v1h-1zM215 7h1v1h-1zM217 7h1v1h-1zM221 7h1v1h-1zM225 7h1v1h-1zM227 7h1v1h-1zM236 7h1v1h-1zM246 7h1v1h-1zM249 7h1v1h-1zM258 7h1v1h-1zM267 7h1v1h-1zM277 7h1v1h-1zM280 7h1v1h-1zM287 7h2v1h-2zM291 7h2v1h-2zM296 7h1v1h-1zM301 7h1v1h-1zM304 7h1v1h-1zM306 7h1v1h-1zM315 7h1v1h-1zM317 7h1v1h-1zM324 7h2v1h-2zM335 7h1v1h-1zM337 7h1v1h-1zM359 7h1v1h-1zM378 7h1v1h-1zM400 7h1v1h-1zM404 7h1v1h-1zM413 7h1v1h-1zM419 7h1v1h-1zM433 7h1v1h-1zM436 7h1v1h-1zM444 7h1v1h-1zM457 7h1v1h-1zM459 7h1v1h-1zM463 7h1v1h-1zM471 7h1v1h-1zM478 7h1v1h-1zM480 7h1v1h-1zM488 7h1v1h-1zM492 7h1v1h-1zM516 7h1v1h-1zM6 8h2v1h-2zM56 8h1v1h-1zM66 8h1v1h-1zM68 8h1v1h-1zM77 8h1v1h-1zM95 8h1v1h-1zM97 8h2v1h-2zM104 8h3v1h-3zM125 8h1v1h-1zM127 8h1v1h-1zM136 8h1v1h-1zM139 8h1v1h-1zM145 8h1v1h-1zM153 8h1v1h-1zM155 8h6v1h-6zM170 8h1v1h-1zM175 8h1v1h-1zM179 8h2v1h-2zM244 8h1v1h-1zM249 8h1v1h-1zM256 8h2v1h-2zM261 8h2v1h-2zM275 8h1v1h-1zM280 8h1v1h-1zM294 8h1v1h-1zM310 8h2v1h-2zM318 8h1v1h-1zM320 8h1v1h-1zM328 8h1v1h-1zM337 8h1v1h-1zM339 8h3v1h-3zM346 8h3v1h-3zM367 8h3v1h-3zM378 8h1v1h-1zM383 8h2v1h-2zM406 8h1v1h-1zM409 8h1v1h-1zM419 8h1v1h-1zM421 8h1v1h-1zM438 8h2v1h-2zM458 8h2v1h-2zM478 8h1v1h-1zM486 8h2v1h-2zM510 8h1v1h-1zM512 8h1v1h-1zM48 9h1v1h-1zM60 9h1v1h-1zM65 9h1v1h-1zM78 9h1v1h-1zM94 9h1v1h-1zM96 9h1v1h-1zM104 9h1v1h-1zM107 9h1v1h-1zM124 9h1v1h-1zM128 9h1v1h-1zM135 9h2v1h-2zM139 9h1v1h-1zM142 9h1v1h-1zM152 9h1v1h-1zM154 9h2v1h-2zM157 9h2v1h-2zM160 9h1v1h-1zM256 9h2v1h-2zM261 9h2v1h-2zM294 9h2v1h-2zM312 9h1v1h-1zM317 9h1v1h-1zM338 9h2v1h-2zM341 9h1v1h-1zM346 9h1v1h-1zM348 9h1v1h-1zM367 9h1v1h-1zM369 9h1v1h-1zM378 9h1v1h-1zM418 9h1v1h-1zM420 9h1v1h-1zM437 9h1v1h-1zM440 9h1v1h-1zM470 9h1v1h-1zM472 9h1v1h-1zM477 9h1v1h-1zM481 9h1v1h-1zM509 9h1v1h-1zM511 9h1v1h-1zM138 10h1v1h-1zM347 10h1v1h-1zM378 10h2v1h-2zM486 10h2v1h-2z'/><path fill='currentColor' fill-opacity='0.50' d='M200 2h2v1h-2zM411 2h3v1h-3zM24 3h2v1h-2zM60 3h1v1h-1zM70 3h1v1h-1zM83 3h2v1h-2zM91 3h2v1h-2zM111 3h2v1h-2zM147 3h1v1h-1zM189 3h2v1h-2zM200 3h2v1h-2zM237 3h1v1h-1zM266 3h3v1h-3zM271 3h1v1h-1zM290 3h1v1h-1zM297 3h1v1h-1zM303 3h1v1h-1zM374 3h1v1h-1zM387 3h1v1h-1zM389 3h1v1h-1zM398 3h2v1h-2zM404 3h2v1h-2zM422 3h1v1h-1zM430 3h1v1h-1zM445 3h1v1h-1zM473 3h2v1h-2zM493 3h1v1h-1zM504 3h1v1h-1zM4 4h1v1h-1zM10 4h2v1h-2zM24 4h2v1h-2zM30 4h2v1h-2zM60 4h1v1h-1zM69 4h1v1h-1zM71 4h1v1h-1zM83 4h2v1h-2zM91 4h2v1h-2zM111 4h2v1h-2zM120 4h1v1h-1zM131 4h1v1h-1zM134 4h1v1h-1zM147 4h1v1h-1zM166 4h2v1h-2zM184 4h3v1h-3zM191 4h1v1h-1zM197 4h1v1h-1zM201 4h1v1h-1zM206 4h1v1h-1zM208 4h1v1h-1zM218 4h1v1h-1zM222 4h1v1h-1zM229 4h1v1h-1zM232 4h1v1h-1zM237 4h1v1h-1zM254 4h2v1h-2zM266 4h3v1h-3zM270 4h1v1h-1zM272 4h1v1h-1zM290 4h1v1h-1zM292 4h1v1h-1zM297 4h1v1h-1zM301 4h1v1h-1zM303 4h1v1h-1zM308 4h1v1h-1zM321 4h2v1h-2zM343 4h1v1h-1zM371 4h1v1h-1zM374 4h1v1h-1zM387 4h1v1h-1zM392 4h1v1h-1zM394 4h1v1h-1zM398 4h2v1h-2zM404 4h2v1h-2zM412 4h1v1h-1zM420 4h1v1h-1zM422 4h1v1h-1zM425 4h1v1h-1zM430 4h1v1h-1zM445 4h1v1h-1zM453 4h2v1h-2zM466 4h1v1h-1zM472 4h3v1h-3zM493 4h1v1h-1zM495 4h2v1h-2zM504 4h1v1h-1zM4 5h1v1h-1zM12 5h1v1h-1zM19 5h1v1h-1zM23 5h3v1h-3zM37 5h1v1h-1zM45 5h2v1h-2zM52 5h1v1h-1zM60 5h1v1h-1zM62 5h1v1h-1zM82 5h3v1h-3zM90 5h3v1h-3zM99 5h1v1h-1zM108 5h1v1h-1zM111 5h2v1h-2zM116 5h1v1h-1zM118 5h1v1h-1zM138 5h1v1h-1zM141 5h1v1h-1zM162 5h1v1h-1zM165 5h1v1h-1zM167 5h1v1h-1zM173 5h1v1h-1zM175 5h1v1h-1zM181 5h1v1h-1zM187 5h2v1h-2zM193 5h2v1h-2zM200 5h2v1h-2zM206 5h1v1h-1zM208 5h1v1h-1zM211 5h1v1h-1zM214 5h2v1h-2zM217 5h1v1h-1zM221 5h1v1h-1zM223 5h1v1h-1zM229 5h2v1h-2zM235 5h3v1h-3zM241 5h1v1h-1zM247 5h1v1h-1zM252 5h1v1h-1zM257 5h1v1h-1zM259 5h1v1h-1zM266 5h3v1h-3zM278 5h1v1h-1zM280 5h1v1h-1zM283 5h1v1h-1zM290 5h1v1h-1zM295 5h1v1h-1zM297 5h1v1h-1zM303 5h1v1h-1zM308 5h2v1h-2zM314 5h1v1h-1zM322 5h1v1h-1zM331 5h1v1h-1zM336 5h1v1h-1zM353 5h1v1h-1zM355 5h1v1h-1zM366 5h1v1h-1zM375 5h1v1h-1zM380 5h1v1h-1zM395 5h1v1h-1zM398 5h2v1h-2zM404 5h2v1h-2zM411 5h2v1h-2zM418 5h1v1h-1zM422 5h1v1h-1zM425 5h1v1h-1zM428 5h3v1h-3zM440 5h2v1h-2zM443 5h1v1h-1zM445 5h1v1h-1zM449 5h1v1h-1zM454 5h1v1h-1zM460 5h1v1h-1zM466 5h1v1h-1zM473 5h2v1h-2zM504 5h1v1h-1zM508 5h1v1h-1zM4 6h1v1h-1zM7 6h2v1h-2zM13 6h2v1h-2zM23 6h3v1h-3zM27 6h3v1h-3zM33 6h6v1h-6zM57 6h1v1h-1zM62 6h2v1h-2zM65 6h5v1h-5zM74 6h1v1h-1zM81 6h4v1h-4zM89 6h1v1h-1zM91 6h2v1h-2zM103 6h2v1h-2zM106 6h2v1h-2zM109 6h4v1h-4zM116 6h1v1h-1zM121 6h1v1h-1zM124 6h1v1h-1zM131 6h2v1h-2zM136 6h2v1h-2zM139 6h1v1h-1zM144 6h2v1h-2zM163 6h3v1h-3zM171 6h1v1h-1zM178 6h2v1h-2zM193 6h2v1h-2zM200 6h2v1h-2zM206 6h1v1h-1zM211 6h1v1h-1zM214 6h2v1h-2zM217 6h1v1h-1zM232 6h2v1h-2zM235 6h2v1h-2zM245 6h1v1h-1zM257 6h2v1h-2zM266 6h1v1h-1zM268 6h1v1h-1zM270 6h1v1h-1zM276 6h1v1h-1zM284 6h1v1h-1zM286 6h2v1h-2zM289 6h2v1h-2zM293 6h1v1h-1zM296 6h2v1h-2zM302 6h2v1h-2zM312 6h1v1h-1zM314 6h2v1h-2zM317 6h3v1h-3zM323 6h1v1h-1zM334 6h1v1h-1zM343 6h2v1h-2zM356 6h1v1h-1zM358 6h2v1h-2zM371 6h2v1h-2zM384 6h2v1h-2zM398 6h2v1h-2zM401 6h1v1h-1zM404 6h2v1h-2zM407 6h1v1h-1zM421 6h2v1h-2zM425 6h1v1h-1zM428 6h3v1h-3zM434 6h1v1h-1zM437 6h1v1h-1zM448 6h1v1h-1zM451 6h1v1h-1zM461 6h1v1h-1zM464 6h1v1h-1zM473 6h2v1h-2zM477 6h1v1h-1zM480 6h2v1h-2zM484 6h2v1h-2zM487 6h2v1h-2zM503 6h2v1h-2zM513 6h3v1h-3zM0 7h3v1h-3zM20 7h1v1h-1zM42 7h1v1h-1zM46 7h1v1h-1zM52 7h1v1h-1zM56 7h2v1h-2zM74 7h1v1h-1zM82 7h1v1h-1zM90 7h3v1h-3zM99 7h1v1h-1zM103 7h1v1h-1zM128 7h2v1h-2zM138 7h1v1h-1zM144 7h1v1h-1zM170 7h2v1h-2zM178 7h1v1h-1zM181 7h1v1h-1zM186 7h1v1h-1zM189 7h1v1h-1zM191 7h1v1h-1zM201 7h1v1h-1zM206 7h1v1h-1zM211 7h1v1h-1zM218 7h1v1h-1zM222 7h1v1h-1zM244 7h2v1h-2zM259 7h1v1h-1zM268 7h1v1h-1zM275 7h2v1h-2zM289 7h1v1h-1zM297 7h1v1h-1zM302 7h1v1h-1zM322 7h2v1h-2zM331 7h1v1h-1zM334 7h1v1h-1zM362 7h2v1h-2zM395 7h1v1h-1zM398 7h2v1h-2zM401 7h1v1h-1zM411 7h2v1h-2zM420 7h4v1h-4zM429 7h2v1h-2zM440 7h1v1h-1zM454 7h1v1h-1zM467 7h1v1h-1zM473 7h2v1h-2zM499 7h1v1h-1zM508 7h1v1h-1zM47 8h1v1h-1zM57 8h1v1h-1zM59 8h2v1h-2zM74 8h2v1h-2zM109 8h2v1h-2zM171 8h1v1h-1zM174 8h1v1h-1zM245 8h1v1h-1zM248 8h1v1h-1zM276 8h1v1h-1zM279 8h1v1h-1zM288 8h2v1h-2zM292 8h2v1h-2zM301 8h2v1h-2zM323 8h2v1h-2zM334 8h2v1h-2zM400 8h2v1h-2zM436 8h2v1h-2zM442 8h2v1h-2zM457 8h1v1h-1zM460 8h1v1h-1zM463 8h2v1h-2zM471 8h1v1h-1zM480 8h2v1h-2zM6 9h2v1h-2zM46 9h1v1h-1zM67 9h1v1h-1zM98 9h1v1h-1zM103 9h1v1h-1zM105 9h2v1h-2zM109 9h1v1h-1zM144 9h1v1h-1zM156 9h1v1h-1zM159 9h1v1h-1zM171 9h1v1h-1zM174 9h1v1h-1zM178 9h1v1h-1zM180 9h1v1h-1zM245 9h1v1h-1zM248 9h1v1h-1zM276 9h1v1h-1zM279 9h1v1h-1zM287 9h2v1h-2zM291 9h2v1h-2zM300 9h2v1h-2zM310 9h2v1h-2zM319 9h1v1h-1zM327 9h1v1h-1zM340 9h1v1h-1zM347 9h1v1h-1zM368 9h1v1h-1zM383 9h2v1h-2zM399 9h2v1h-2zM407 9h1v1h-1zM435 9h2v1h-2zM438 9h2v1h-2zM441 9h1v1h-1zM457 9h2v1h-2zM462 9h2v1h-2zM486 9h2v1h-2zM142 10h1v1h-1zM461 10h1v1h-1z'/><path fill='currentColor' fill-opacity='0.75' d='M212 2h1v1h-1zM216 2h1v1h-1zM13 3h2v1h-2zM39 3h1v1h-1zM64 3h1v1h-1zM176 3h1v1h-1zM184 3h1v1h-1zM187 3h1v1h-1zM204 3h1v1h-1zM207 3h1v1h-1zM212 3h1v1h-1zM216 3h1v1h-1zM281 3h1v1h-1zM316 3h1v1h-1zM375 3h1v1h-1zM494 3h2v1h-2zM12 4h1v1h-1zM39 4h1v1h-1zM64 4h1v1h-1zM176 4h1v1h-1zM189 4h1v1h-1zM192 4h2v1h-2zM195 4h2v1h-2zM198 4h2v1h-2zM205 4h1v1h-1zM209 4h2v1h-2zM212 4h3v1h-3zM216 4h1v1h-1zM219 4h2v1h-2zM223 4h2v1h-2zM281 4h1v1h-1zM316 4h1v1h-1zM373 4h1v1h-1zM13 5h1v1h-1zM22 5h1v1h-1zM27 5h2v1h-2zM39 5h1v1h-1zM44 5h1v1h-1zM50 5h2v1h-2zM64 5h1v1h-1zM66 5h2v1h-2zM69 5h1v1h-1zM71 5h1v1h-1zM109 5h1v1h-1zM127 5h2v1h-2zM131 5h1v1h-1zM139 5h2v1h-2zM147 5h2v1h-2zM163 5h2v1h-2zM174 5h1v1h-1zM176 5h1v1h-1zM185 5h2v1h-2zM189 5h1v1h-1zM191 5h1v1h-1zM195 5h1v1h-1zM198 5h1v1h-1zM205 5h1v1h-1zM209 5h2v1h-2zM212 5h1v1h-1zM216 5h1v1h-1zM218 5h3v1h-3zM222 5h1v1h-1zM248 5h1v1h-1zM270 5h1v1h-1zM272 5h1v1h-1zM279 5h1v1h-1zM281 5h1v1h-1zM286 5h1v1h-1zM316 5h1v1h-1zM318 5h2v1h-2zM346 5h2v1h-2zM358 5h1v1h-1zM374 5h1v1h-1zM387 5h2v1h-2zM407 5h2v1h-2zM451 5h1v1h-1zM458 5h2v1h-2zM467 5h1v1h-1zM491 5h1v1h-1zM495 5h1v1h-1zM500 5h2v1h-2zM506 5h2v1h-2zM514 5h2v1h-2zM5 6h1v1h-1zM10 6h1v1h-1zM17 6h1v1h-1zM19 6h1v1h-1zM31 6h1v1h-1zM39 6h1v1h-1zM45 6h2v1h-2zM48 6h1v1h-1zM52 6h2v1h-2zM60 6h1v1h-1zM64 6h1v1h-1zM70 6h2v1h-2zM78 6h1v1h-1zM80 6h1v1h-1zM86 6h1v1h-1zM88 6h1v1h-1zM90 6h1v1h-1zM96 6h1v1h-1zM99 6h1v1h-1zM108 6h1v1h-1zM114 6h2v1h-2zM118 6h1v1h-1zM126 6h1v1h-1zM134 6h1v1h-1zM141 6h1v1h-1zM150 6h1v1h-1zM154 6h1v1h-1zM157 6h1v1h-1zM160 6h1v1h-1zM167 6h1v1h-1zM173 6h1v1h-1zM176 6h1v1h-1zM181 6h1v1h-1zM185 6h2v1h-2zM188 6h2v1h-2zM191 6h1v1h-1zM195 6h1v1h-1zM198 6h1v1h-1zM205 6h1v1h-1zM208 6h1v1h-1zM210 6h1v1h-1zM212 6h1v1h-1zM216 6h1v1h-1zM218 6h1v1h-1zM224 6h1v1h-1zM230 6h1v1h-1zM237 6h1v1h-1zM239 6h1v1h-1zM241 6h1v1h-1zM247 6h1v1h-1zM252 6h1v1h-1zM255 6h1v1h-1zM259 6h1v1h-1zM264 6h1v1h-1zM271 6h2v1h-2zM278 6h1v1h-1zM281 6h1v1h-1zM283 6h1v1h-1zM285 6h1v1h-1zM295 6h1v1h-1zM309 6h1v1h-1zM316 6h1v1h-1zM322 6h1v1h-1zM329 6h1v1h-1zM331 6h1v1h-1zM338 6h1v1h-1zM341 6h1v1h-1zM349 6h1v1h-1zM351 6h1v1h-1zM353 6h1v1h-1zM355 6h1v1h-1zM357 6h1v1h-1zM366 6h1v1h-1zM369 6h1v1h-1zM375 6h1v1h-1zM380 6h1v1h-1zM382 6h1v1h-1zM390 6h1v1h-1zM392 6h1v1h-1zM395 6h1v1h-1zM408 6h1v1h-1zM411 6h2v1h-2zM416 6h1v1h-1zM418 6h1v1h-1zM420 6h1v1h-1zM426 6h1v1h-1zM440 6h2v1h-2zM443 6h1v1h-1zM445 6h1v1h-1zM447 6h1v1h-1zM449 6h1v1h-1zM454 6h1v1h-1zM459 6h1v1h-1zM467 6h1v1h-1zM472 6h1v1h-1zM483 6h1v1h-1zM494 6h1v1h-1zM499 6h1v1h-1zM501 6h1v1h-1zM508 6h2v1h-2zM511 6h1v1h-1zM5 7h7v1h-7zM17 7h1v1h-1zM19 7h1v1h-1zM21 7h2v1h-2zM25 7h2v1h-2zM29 7h4v1h-4zM34 7h4v1h-4zM39 7h1v1h-1zM43 7h2v1h-2zM49 7h1v1h-1zM51 7h1v1h-1zM61 7h2v1h-2zM64 7h1v1h-1zM68 7h4v1h-4zM78 7h1v1h-1zM80 7h2v1h-2zM84 7h1v1h-1zM86 7h4v1h-4zM96 7h3v1h-3zM105 7h2v1h-2zM108 7h1v1h-1zM110 7h1v1h-1zM112 7h2v1h-2zM119 7h2v1h-2zM124 7h1v1h-1zM126 7h1v1h-1zM133 7h4v1h-4zM139 7h1v1h-1zM146 7h1v1h-1zM154 7h14v1h-14zM174 7h1v1h-1zM176 7h1v1h-1zM180 7h1v1h-1zM185 7h1v1h-1zM188 7h1v1h-1zM192 7h2v1h-2zM195 7h1v1h-1zM198 7h3v1h-3zM205 7h1v1h-1zM208 7h2v1h-2zM212 7h3v1h-3zM216 7h1v1h-1zM219 7h2v1h-2zM223 7h2v1h-2zM228 7h1v1h-1zM230 7h2v1h-2zM233 7h3v1h-3zM237 7h3v1h-3zM241 7h1v1h-1zM248 7h1v1h-1zM250 7h1v1h-1zM252 7h3v1h-3zM256 7h2v1h-2zM261 7h6v1h-6zM269 7h4v1h-4zM279 7h1v1h-1zM281 7h2v1h-2zM290 7h1v1h-1zM294 7h2v1h-2zM303 7h1v1h-1zM307 7h1v1h-1zM309 7h3v1h-3zM313 7h2v1h-2zM316 7h1v1h-1zM320 7h2v1h-2zM326 7h4v1h-4zM338 7h5v1h-5zM344 7h2v1h-2zM347 7h2v1h-2zM350 7h2v1h-2zM354 7h1v1h-1zM364 7h1v1h-1zM366 7h5v1h-5zM372 7h2v1h-2zM375 7h1v1h-1zM379 7h2v1h-2zM383 7h3v1h-3zM391 7h4v1h-4zM405 7h1v1h-1zM408 7h3v1h-3zM416 7h1v1h-1zM418 7h1v1h-1zM426 7h3v1h-3zM434 7h1v1h-1zM438 7h2v1h-2zM441 7h1v1h-1zM443 7h1v1h-1zM445 7h3v1h-3zM452 7h2v1h-2zM458 7h1v1h-1zM464 7h3v1h-3zM472 7h1v1h-1zM477 7h1v1h-1zM483 7h5v1h-5zM491 7h1v1h-1zM493 7h1v1h-1zM495 7h2v1h-2zM501 7h2v1h-2zM504 7h2v1h-2zM507 7h1v1h-1zM511 7h1v1h-1zM513 7h1v1h-1zM515 7h1v1h-1zM48 8h1v1h-1zM67 8h1v1h-1zM78 8h1v1h-1zM96 8h1v1h-1zM103 8h1v1h-1zM124 8h1v1h-1zM128 8h1v1h-1zM138 8h1v1h-1zM144 8h1v1h-1zM154 8h1v1h-1zM178 8h1v1h-1zM319 8h1v1h-1zM327 8h1v1h-1zM338 8h1v1h-1zM379 8h1v1h-1zM407 8h2v1h-2zM420 8h1v1h-1zM472 8h1v1h-1zM477 8h1v1h-1zM511 8h1v1h-1zM47 9h1v1h-1zM57 9h1v1h-1zM59 9h1v1h-1zM66 9h1v1h-1zM75 9h1v1h-1zM95 9h1v1h-1zM102 9h1v1h-1zM108 9h1v1h-1zM125 9h1v1h-1zM127 9h1v1h-1zM138 9h1v1h-1zM143 9h1v1h-1zM153 9h1v1h-1zM177 9h1v1h-1zM318 9h1v1h-1zM324 9h1v1h-1zM335 9h1v1h-1zM379 9h1v1h-1zM408 9h1v1h-1zM419 9h1v1h-1zM442 9h1v1h-1zM471 9h1v1h-1zM478 9h1v1h-1zM480 9h1v1h-1zM510 9h1v1h-1zM139 10h1v1h-1zM458 10h1v1h-1z'/><path fill='currentColor' fill-opacity='1.00' d='M205 3h2v1h-2zM70 4h1v1h-1zM187 4h1v1h-1zM200 4h1v1h-1zM271 4h1v1h-1zM18 5h1v1h-1zM47 5h1v1h-1zM117 5h1v1h-1zM149 5h1v1h-1zM240 5h1v1h-1zM284 5h2v1h-2zM330 5h1v1h-1zM352 5h1v1h-1zM356 5h2v1h-2zM381 5h1v1h-1zM389 5h1v1h-1zM417 5h1v1h-1zM442 5h1v1h-1zM450 5h1v1h-1zM140 6h1v1h-1zM147 6h1v1h-1zM348 6h1v1h-1zM387 6h1v1h-1zM460 6h1v1h-1zM3 7h2v1h-2zM12 7h2v1h-2zM18 7h1v1h-1zM27 7h2v1h-2zM33 7h1v1h-1zM47 7h2v1h-2zM50 7h1v1h-1zM60 7h1v1h-1zM66 7h2v1h-2zM79 7h1v1h-1zM85 7h1v1h-1zM104 7h1v1h-1zM109 7h1v1h-1zM114 7h5v1h-5zM127 7h1v1h-1zM130 7h3v1h-3zM145 7h1v1h-1zM147 7h3v1h-3zM173 7h1v1h-1zM179 7h1v1h-1zM210 7h1v1h-1zM229 7h1v1h-1zM232 7h1v1h-1zM240 7h1v1h-1zM247 7h1v1h-1zM251 7h1v1h-1zM255 7h1v1h-1zM260 7h1v1h-1zM278 7h1v1h-1zM283 7h4v1h-4zM293 7h1v1h-1zM308 7h1v1h-1zM312 7h1v1h-1zM318 7h2v1h-2zM330 7h1v1h-1zM343 7h1v1h-1zM346 7h1v1h-1zM349 7h1v1h-1zM352 7h2v1h-2zM355 7h4v1h-4zM365 7h1v1h-1zM371 7h1v1h-1zM374 7h1v1h-1zM381 7h2v1h-2zM386 7h5v1h-5zM406 7h2v1h-2zM417 7h1v1h-1zM424 7h2v1h-2zM437 7h1v1h-1zM442 7h1v1h-1zM448 7h4v1h-4zM481 7h2v1h-2zM494 7h1v1h-1zM500 7h1v1h-1zM503 7h1v1h-1zM506 7h1v1h-1zM512 7h1v1h-1zM514 7h1v1h-1zM58 9h1v1h-1zM76 9h2v1h-2zM126 9h1v1h-1zM172 9h2v1h-2zM246 9h2v1h-2zM277 9h2v1h-2zM325 9h2v1h-2zM336 9h2v1h-2zM479 9h1v1h-1zM140 10h2v1h-2zM459 10h2v1h-2z'/></svg></div><div class='a' style='left:313px;top:334px;width:529px;height:12px;color:#fafafa'><svg width='529' height='12' viewBox='0 0 613 12' preserveAspectRatio='none' style='display:block'><path fill='currentColor' fill-opacity='0.25' d='M66 2h2v1h-2zM145 2h2v1h-2zM235 2h2v1h-2zM476 2h1v1h-1zM478 2h1v1h-1zM563 2h1v1h-1zM566 2h1v1h-1zM9 3h1v1h-1zM12 3h1v1h-1zM35 3h1v1h-1zM44 3h1v1h-1zM49 3h1v1h-1zM60 3h1v1h-1zM63 3h1v1h-1zM66 3h2v1h-2zM77 3h1v1h-1zM87 3h1v1h-1zM115 3h1v1h-1zM117 3h1v1h-1zM120 3h1v1h-1zM122 3h1v1h-1zM142 3h1v1h-1zM145 3h2v1h-2zM180 3h1v1h-1zM187 3h3v1h-3zM205 3h3v1h-3zM235 3h2v1h-2zM256 3h1v1h-1zM263 3h1v1h-1zM268 3h1v1h-1zM274 3h1v1h-1zM276 3h2v1h-2zM279 3h1v1h-1zM284 3h1v1h-1zM288 3h1v1h-1zM290 3h1v1h-1zM301 3h1v1h-1zM306 3h1v1h-1zM332 3h1v1h-1zM340 3h1v1h-1zM359 3h1v1h-1zM361 3h1v1h-1zM373 3h1v1h-1zM404 3h1v1h-1zM408 3h1v1h-1zM425 3h1v1h-1zM443 3h1v1h-1zM476 3h1v1h-1zM478 3h1v1h-1zM546 3h3v1h-3zM564 3h2v1h-2zM588 3h1v1h-1zM600 3h1v1h-1zM8 4h1v1h-1zM28 4h1v1h-1zM34 4h1v1h-1zM36 4h1v1h-1zM46 4h2v1h-2zM49 4h1v1h-1zM51 4h1v1h-1zM60 4h1v1h-1zM63 4h1v1h-1zM65 4h1v1h-1zM68 4h1v1h-1zM87 4h1v1h-1zM94 4h1v1h-1zM103 4h1v1h-1zM115 4h1v1h-1zM117 4h1v1h-1zM125 4h1v1h-1zM142 4h1v1h-1zM144 4h1v1h-1zM147 4h1v1h-1zM155 4h1v1h-1zM166 4h1v1h-1zM180 4h1v1h-1zM189 4h1v1h-1zM194 4h1v1h-1zM198 4h1v1h-1zM205 4h1v1h-1zM212 4h1v1h-1zM220 4h2v1h-2zM224 4h1v1h-1zM229 4h1v1h-1zM237 4h1v1h-1zM253 4h1v1h-1zM256 4h1v1h-1zM263 4h1v1h-1zM268 4h1v1h-1zM278 4h2v1h-2zM282 4h1v1h-1zM287 4h2v1h-2zM290 4h1v1h-1zM304 4h1v1h-1zM308 4h1v1h-1zM314 4h2v1h-2zM329 4h1v1h-1zM332 4h1v1h-1zM340 4h1v1h-1zM346 4h1v1h-1zM348 4h1v1h-1zM355 4h1v1h-1zM361 4h1v1h-1zM373 4h1v1h-1zM380 4h1v1h-1zM390 4h1v1h-1zM404 4h1v1h-1zM408 4h1v1h-1zM416 4h1v1h-1zM420 4h1v1h-1zM430 4h1v1h-1zM432 4h1v1h-1zM437 4h1v1h-1zM439 4h1v1h-1zM472 4h1v1h-1zM474 4h1v1h-1zM476 4h1v1h-1zM478 4h1v1h-1zM482 4h1v1h-1zM486 4h1v1h-1zM496 4h2v1h-2zM512 4h2v1h-2zM519 4h2v1h-2zM534 4h1v1h-1zM539 4h1v1h-1zM546 4h1v1h-1zM548 4h1v1h-1zM552 4h1v1h-1zM555 4h2v1h-2zM578 4h1v1h-1zM582 4h1v1h-1zM588 4h3v1h-3zM592 4h1v1h-1zM597 4h1v1h-1zM600 4h1v1h-1zM5 5h1v1h-1zM7 5h1v1h-1zM11 5h1v1h-1zM18 5h1v1h-1zM23 5h2v1h-2zM31 5h1v1h-1zM37 5h1v1h-1zM44 5h1v1h-1zM46 5h1v1h-1zM49 5h1v1h-1zM53 5h1v1h-1zM60 5h1v1h-1zM63 5h1v1h-1zM65 5h1v1h-1zM74 5h1v1h-1zM85 5h1v1h-1zM87 5h1v1h-1zM89 5h1v1h-1zM93 5h3v1h-3zM98 5h1v1h-1zM101 5h1v1h-1zM104 5h2v1h-2zM113 5h1v1h-1zM123 5h2v1h-2zM130 5h1v1h-1zM141 5h2v1h-2zM144 5h1v1h-1zM150 5h2v1h-2zM159 5h1v1h-1zM165 5h1v1h-1zM167 5h1v1h-1zM175 5h1v1h-1zM178 5h1v1h-1zM180 5h1v1h-1zM183 5h1v1h-1zM188 5h2v1h-2zM196 5h1v1h-1zM199 5h1v1h-1zM204 5h1v1h-1zM206 5h1v1h-1zM210 5h1v1h-1zM213 5h1v1h-1zM227 5h1v1h-1zM233 5h2v1h-2zM242 5h1v1h-1zM247 5h1v1h-1zM249 5h3v1h-3zM256 5h1v1h-1zM258 5h1v1h-1zM261 5h1v1h-1zM265 5h1v1h-1zM268 5h1v1h-1zM279 5h1v1h-1zM290 5h1v1h-1zM293 5h1v1h-1zM301 5h1v1h-1zM310 5h1v1h-1zM314 5h1v1h-1zM318 5h1v1h-1zM320 5h1v1h-1zM322 5h2v1h-2zM328 5h1v1h-1zM330 5h1v1h-1zM332 5h1v1h-1zM336 5h1v1h-1zM344 5h1v1h-1zM347 5h1v1h-1zM349 5h1v1h-1zM351 5h1v1h-1zM354 5h1v1h-1zM358 5h1v1h-1zM361 5h1v1h-1zM363 5h1v1h-1zM367 5h1v1h-1zM369 5h1v1h-1zM373 5h1v1h-1zM392 5h1v1h-1zM404 5h1v1h-1zM412 5h1v1h-1zM422 5h1v1h-1zM425 5h1v1h-1zM428 5h1v1h-1zM431 5h1v1h-1zM433 5h1v1h-1zM435 5h1v1h-1zM438 5h1v1h-1zM442 5h1v1h-1zM451 5h1v1h-1zM453 5h1v1h-1zM456 5h1v1h-1zM458 5h1v1h-1zM460 5h2v1h-2zM465 5h1v1h-1zM474 5h1v1h-1zM476 5h1v1h-1zM482 5h1v1h-1zM490 5h1v1h-1zM496 5h1v1h-1zM500 5h1v1h-1zM503 5h1v1h-1zM505 5h1v1h-1zM507 5h1v1h-1zM509 5h1v1h-1zM515 5h1v1h-1zM519 5h1v1h-1zM523 5h1v1h-1zM525 5h1v1h-1zM527 5h2v1h-2zM532 5h1v1h-1zM535 5h1v1h-1zM538 5h1v1h-1zM540 5h2v1h-2zM545 5h1v1h-1zM547 5h2v1h-2zM551 5h1v1h-1zM555 5h1v1h-1zM569 5h1v1h-1zM573 5h1v1h-1zM577 5h1v1h-1zM579 5h1v1h-1zM582 5h1v1h-1zM589 5h1v1h-1zM600 5h1v1h-1zM604 5h1v1h-1zM609 5h1v1h-1zM8 6h1v1h-1zM10 6h1v1h-1zM12 6h2v1h-2zM17 6h1v1h-1zM19 6h1v1h-1zM21 6h1v1h-1zM24 6h1v1h-1zM32 6h1v1h-1zM34 6h1v1h-1zM46 6h2v1h-2zM49 6h1v1h-1zM51 6h1v1h-1zM60 6h2v1h-2zM63 6h1v1h-1zM65 6h1v1h-1zM72 6h1v1h-1zM75 6h1v1h-1zM77 6h2v1h-2zM83 6h1v1h-1zM85 6h1v1h-1zM87 6h1v1h-1zM92 6h1v1h-1zM98 6h1v1h-1zM105 6h1v1h-1zM113 6h1v1h-1zM123 6h2v1h-2zM130 6h1v1h-1zM135 6h2v1h-2zM144 6h1v1h-1zM151 6h1v1h-1zM159 6h1v1h-1zM162 6h1v1h-1zM172 6h1v1h-1zM180 6h1v1h-1zM185 6h1v1h-1zM191 6h1v1h-1zM193 6h1v1h-1zM196 6h1v1h-1zM200 6h2v1h-2zM206 6h1v1h-1zM216 6h1v1h-1zM218 6h1v1h-1zM225 6h1v1h-1zM227 6h1v1h-1zM232 6h1v1h-1zM234 6h1v1h-1zM242 6h1v1h-1zM262 6h1v1h-1zM266 6h1v1h-1zM268 6h1v1h-1zM270 6h1v1h-1zM272 6h1v1h-1zM278 6h2v1h-2zM284 6h2v1h-2zM292 6h2v1h-2zM304 6h1v1h-1zM308 6h1v1h-1zM316 6h2v1h-2zM325 6h1v1h-1zM332 6h2v1h-2zM348 6h1v1h-1zM350 6h2v1h-2zM357 6h1v1h-1zM361 6h1v1h-1zM364 6h2v1h-2zM368 6h1v1h-1zM370 6h2v1h-2zM373 6h1v1h-1zM379 6h1v1h-1zM383 6h1v1h-1zM389 6h1v1h-1zM391 6h2v1h-2zM395 6h1v1h-1zM402 6h1v1h-1zM404 6h1v1h-1zM412 6h1v1h-1zM422 6h1v1h-1zM425 6h1v1h-1zM432 6h1v1h-1zM434 6h2v1h-2zM439 6h1v1h-1zM441 6h1v1h-1zM445 6h1v1h-1zM450 6h1v1h-1zM454 6h2v1h-2zM463 6h1v1h-1zM468 6h1v1h-1zM472 6h1v1h-1zM474 6h1v1h-1zM476 6h1v1h-1zM484 6h1v1h-1zM490 6h1v1h-1zM498 6h2v1h-2zM502 6h1v1h-1zM504 6h1v1h-1zM506 6h1v1h-1zM510 6h1v1h-1zM521 6h2v1h-2zM530 6h1v1h-1zM538 6h2v1h-2zM541 6h3v1h-3zM546 6h2v1h-2zM552 6h1v1h-1zM554 6h1v1h-1zM556 6h1v1h-1zM560 6h1v1h-1zM562 6h1v1h-1zM569 6h1v1h-1zM576 6h1v1h-1zM578 6h1v1h-1zM580 6h1v1h-1zM582 6h1v1h-1zM588 6h3v1h-3zM592 6h1v1h-1zM594 6h1v1h-1zM596 6h1v1h-1zM601 6h1v1h-1zM608 6h1v1h-1zM610 6h1v1h-1zM612 6h1v1h-1zM13 7h2v1h-2zM23 7h1v1h-1zM37 7h1v1h-1zM49 7h1v1h-1zM51 7h1v1h-1zM55 7h1v1h-1zM63 7h1v1h-1zM68 7h1v1h-1zM71 7h1v1h-1zM83 7h1v1h-1zM85 7h1v1h-1zM87 7h1v1h-1zM101 7h1v1h-1zM109 7h1v1h-1zM116 7h1v1h-1zM118 7h2v1h-2zM121 7h1v1h-1zM125 7h1v1h-1zM136 7h1v1h-1zM142 7h1v1h-1zM150 7h1v1h-1zM162 7h1v1h-1zM167 7h1v1h-1zM175 7h1v1h-1zM189 7h1v1h-1zM210 7h1v1h-1zM218 7h1v1h-1zM225 7h1v1h-1zM238 7h1v1h-1zM256 7h1v1h-1zM258 7h1v1h-1zM268 7h1v1h-1zM274 7h1v1h-1zM276 7h2v1h-2zM284 7h1v1h-1zM288 7h1v1h-1zM306 7h1v1h-1zM308 7h1v1h-1zM330 7h1v1h-1zM340 7h1v1h-1zM344 7h1v1h-1zM361 7h1v1h-1zM373 7h1v1h-1zM385 7h1v1h-1zM387 7h1v1h-1zM404 7h1v1h-1zM416 7h1v1h-1zM420 7h1v1h-1zM422 7h1v1h-1zM428 7h1v1h-1zM468 7h1v1h-1zM472 7h1v1h-1zM474 7h1v1h-1zM476 7h1v1h-1zM478 7h1v1h-1zM482 7h1v1h-1zM484 7h1v1h-1zM490 7h1v1h-1zM494 7h1v1h-1zM515 7h1v1h-1zM532 7h1v1h-1zM539 7h1v1h-1zM548 7h1v1h-1zM557 7h2v1h-2zM569 7h1v1h-1zM571 7h1v1h-1zM582 7h1v1h-1zM588 7h1v1h-1zM604 7h1v1h-1zM606 7h1v1h-1zM17 8h1v1h-1zM55 8h1v1h-1zM57 8h2v1h-2zM60 8h3v1h-3zM77 8h3v1h-3zM85 8h1v1h-1zM90 8h1v1h-1zM92 8h1v1h-1zM105 8h1v1h-1zM110 8h3v1h-3zM140 8h2v1h-2zM156 8h3v1h-3zM170 8h1v1h-1zM172 8h3v1h-3zM176 8h1v1h-1zM178 8h1v1h-1zM195 8h2v1h-2zM198 8h1v1h-1zM200 8h1v1h-1zM203 8h1v1h-1zM214 8h1v1h-1zM239 8h3v1h-3zM248 8h2v1h-2zM259 8h1v1h-1zM261 8h1v1h-1zM272 8h1v1h-1zM292 8h2v1h-2zM335 8h1v1h-1zM337 8h3v1h-3zM350 8h2v1h-2zM355 8h1v1h-1zM365 8h1v1h-1zM370 8h3v1h-3zM379 8h1v1h-1zM391 8h2v1h-2zM397 8h1v1h-1zM399 8h2v1h-2zM412 8h1v1h-1zM434 8h2v1h-2zM437 8h1v1h-1zM439 8h1v1h-1zM445 8h1v1h-1zM448 8h1v1h-1zM450 8h1v1h-1zM454 8h2v1h-2zM466 8h1v1h-1zM488 8h2v1h-2zM498 8h3v1h-3zM535 8h3v1h-3zM543 8h1v1h-1zM569 8h1v1h-1zM574 8h1v1h-1zM576 8h1v1h-1zM59 9h2v1h-2zM62 9h1v1h-1zM77 9h1v1h-1zM79 9h1v1h-1zM86 9h1v1h-1zM91 9h1v1h-1zM110 9h1v1h-1zM112 9h1v1h-1zM135 9h1v1h-1zM139 9h1v1h-1zM156 9h1v1h-1zM158 9h1v1h-1zM161 9h1v1h-1zM163 9h1v1h-1zM169 9h1v1h-1zM171 9h2v1h-2zM174 9h2v1h-2zM177 9h1v1h-1zM199 9h1v1h-1zM202 9h2v1h-2zM214 9h2v1h-2zM239 9h1v1h-1zM241 9h1v1h-1zM258 9h1v1h-1zM294 9h1v1h-1zM334 9h2v1h-2zM337 9h1v1h-1zM339 9h1v1h-1zM352 9h1v1h-1zM365 9h2v1h-2zM370 9h1v1h-1zM372 9h1v1h-1zM393 9h1v1h-1zM396 9h1v1h-1zM400 9h2v1h-2zM412 9h1v1h-1zM438 9h1v1h-1zM456 9h1v1h-1zM467 9h1v1h-1zM488 9h2v1h-2zM498 9h1v1h-1zM500 9h1v1h-1zM535 9h1v1h-1zM540 9h1v1h-1zM543 9h2v1h-2zM568 9h1v1h-1zM572 9h1v1h-1zM575 9h1v1h-1zM455 10h1v1h-1z'/><path fill='currentColor' fill-opacity='0.50' d='M131 2h2v1h-2zM357 2h2v1h-2zM441 2h2v1h-2zM564 2h2v1h-2zM27 3h1v1h-1zM29 3h1v1h-1zM48 3h1v1h-1zM53 3h1v1h-1zM64 3h1v1h-1zM75 3h1v1h-1zM88 3h1v1h-1zM109 3h2v1h-2zM119 3h1v1h-1zM131 3h2v1h-2zM138 3h2v1h-2zM154 3h1v1h-1zM156 3h1v1h-1zM179 3h1v1h-1zM223 3h1v1h-1zM225 3h1v1h-1zM238 3h2v1h-2zM257 3h1v1h-1zM283 3h1v1h-1zM305 3h1v1h-1zM310 3h1v1h-1zM331 3h1v1h-1zM341 3h1v1h-1zM356 3h1v1h-1zM362 3h1v1h-1zM374 3h1v1h-1zM440 3h1v1h-1zM474 3h2v1h-2zM558 3h2v1h-2zM580 3h1v1h-1zM582 3h2v1h-2zM591 3h1v1h-1zM599 3h1v1h-1zM4 4h1v1h-1zM7 4h1v1h-1zM10 4h1v1h-1zM26 4h1v1h-1zM41 4h1v1h-1zM44 4h1v1h-1zM64 4h1v1h-1zM88 4h1v1h-1zM93 4h1v1h-1zM109 4h2v1h-2zM120 4h1v1h-1zM122 4h1v1h-1zM126 4h1v1h-1zM128 4h2v1h-2zM138 4h2v1h-2zM153 4h1v1h-1zM165 4h1v1h-1zM179 4h1v1h-1zM187 4h2v1h-2zM199 4h1v1h-1zM206 4h2v1h-2zM222 4h1v1h-1zM230 4h2v1h-2zM238 4h2v1h-2zM246 4h1v1h-1zM257 4h1v1h-1zM275 4h1v1h-1zM284 4h2v1h-2zM298 4h1v1h-1zM301 4h1v1h-1zM303 4h1v1h-1zM306 4h1v1h-1zM317 4h2v1h-2zM328 4h1v1h-1zM331 4h1v1h-1zM341 4h1v1h-1zM349 4h1v1h-1zM354 4h1v1h-1zM357 4h1v1h-1zM362 4h1v1h-1zM369 4h1v1h-1zM374 4h1v1h-1zM381 4h1v1h-1zM389 4h1v1h-1zM410 4h1v1h-1zM412 4h1v1h-1zM417 4h1v1h-1zM433 4h1v1h-1zM438 4h1v1h-1zM441 4h1v1h-1zM479 4h1v1h-1zM501 4h3v1h-3zM522 4h2v1h-2zM540 4h1v1h-1zM547 4h1v1h-1zM558 4h2v1h-2zM564 4h2v1h-2zM577 4h1v1h-1zM580 4h1v1h-1zM583 4h1v1h-1zM599 4h1v1h-1zM4 5h1v1h-1zM9 5h1v1h-1zM20 5h1v1h-1zM28 5h1v1h-1zM33 5h1v1h-1zM35 5h1v1h-1zM52 5h1v1h-1zM62 5h1v1h-1zM66 5h3v1h-3zM71 5h1v1h-1zM76 5h1v1h-1zM79 5h1v1h-1zM84 5h1v1h-1zM88 5h1v1h-1zM91 5h1v1h-1zM106 5h1v1h-1zM109 5h2v1h-2zM112 5h1v1h-1zM117 5h1v1h-1zM121 5h1v1h-1zM126 5h2v1h-2zM131 5h2v1h-2zM138 5h2v1h-2zM146 5h2v1h-2zM155 5h1v1h-1zM158 5h1v1h-1zM174 5h1v1h-1zM179 5h1v1h-1zM186 5h1v1h-1zM192 5h1v1h-1zM197 5h1v1h-1zM201 5h1v1h-1zM203 5h1v1h-1zM207 5h1v1h-1zM215 5h1v1h-1zM219 5h1v1h-1zM221 5h1v1h-1zM224 5h1v1h-1zM228 5h1v1h-1zM236 5h4v1h-4zM241 5h1v1h-1zM246 5h1v1h-1zM255 5h1v1h-1zM257 5h1v1h-1zM264 5h1v1h-1zM283 5h1v1h-1zM285 5h1v1h-1zM287 5h1v1h-1zM294 5h1v1h-1zM303 5h1v1h-1zM306 5h1v1h-1zM309 5h1v1h-1zM315 5h1v1h-1zM324 5h1v1h-1zM331 5h1v1h-1zM333 5h1v1h-1zM335 5h1v1h-1zM339 5h3v1h-3zM352 5h1v1h-1zM356 5h1v1h-1zM362 5h1v1h-1zM366 5h1v1h-1zM372 5h1v1h-1zM374 5h1v1h-1zM381 5h1v1h-1zM389 5h2v1h-2zM393 5h2v1h-2zM396 5h1v1h-1zM401 5h1v1h-1zM407 5h1v1h-1zM409 5h1v1h-1zM411 5h1v1h-1zM416 5h1v1h-1zM419 5h2v1h-2zM436 5h1v1h-1zM440 5h1v1h-1zM462 5h1v1h-1zM467 5h1v1h-1zM473 5h1v1h-1zM478 5h1v1h-1zM485 5h1v1h-1zM487 5h1v1h-1zM489 5h1v1h-1zM497 5h1v1h-1zM511 5h1v1h-1zM520 5h1v1h-1zM529 5h1v1h-1zM537 5h1v1h-1zM544 5h1v1h-1zM553 5h1v1h-1zM557 5h3v1h-3zM561 5h1v1h-1zM563 5h3v1h-3zM570 5h1v1h-1zM575 5h1v1h-1zM581 5h1v1h-1zM583 5h1v1h-1zM586 5h2v1h-2zM595 5h1v1h-1zM599 5h1v1h-1zM601 5h1v1h-1zM603 5h1v1h-1zM611 5h1v1h-1zM4 6h1v1h-1zM7 6h1v1h-1zM11 6h1v1h-1zM23 6h1v1h-1zM29 6h1v1h-1zM36 6h2v1h-2zM41 6h1v1h-1zM56 6h1v1h-1zM68 6h1v1h-1zM82 6h1v1h-1zM88 6h3v1h-3zM93 6h4v1h-4zM101 6h4v1h-4zM109 6h2v1h-2zM116 6h1v1h-1zM118 6h2v1h-2zM121 6h1v1h-1zM126 6h2v1h-2zM131 6h2v1h-2zM138 6h2v1h-2zM141 6h2v1h-2zM145 6h1v1h-1zM150 6h1v1h-1zM156 6h1v1h-1zM166 6h2v1h-2zM175 6h5v1h-5zM181 6h1v1h-1zM184 6h1v1h-1zM188 6h2v1h-2zM197 6h1v1h-1zM203 6h1v1h-1zM205 6h1v1h-1zM210 6h4v1h-4zM220 6h2v1h-2zM235 6h1v1h-1zM238 6h2v1h-2zM246 6h1v1h-1zM249 6h6v1h-6zM256 6h6v1h-6zM271 6h1v1h-1zM275 6h1v1h-1zM288 6h1v1h-1zM294 6h1v1h-1zM298 6h1v1h-1zM303 6h1v1h-1zM306 6h1v1h-1zM320 6h4v1h-4zM329 6h3v1h-3zM335 6h1v1h-1zM337 6h1v1h-1zM340 6h2v1h-2zM344 6h4v1h-4zM352 6h1v1h-1zM354 6h2v1h-2zM358 6h1v1h-1zM369 6h1v1h-1zM374 6h1v1h-1zM378 6h1v1h-1zM398 6h2v1h-2zM409 6h1v1h-1zM411 6h1v1h-1zM416 6h1v1h-1zM419 6h2v1h-2zM428 6h4v1h-4zM436 6h1v1h-1zM442 6h1v1h-1zM446 6h1v1h-1zM451 6h2v1h-2zM456 6h1v1h-1zM458 6h4v1h-4zM465 6h2v1h-2zM478 6h1v1h-1zM486 6h2v1h-2zM489 6h1v1h-1zM503 6h1v1h-1zM508 6h1v1h-1zM512 6h1v1h-1zM514 6h2v1h-2zM525 6h4v1h-4zM532 6h4v1h-4zM548 6h1v1h-1zM557 6h3v1h-3zM564 6h2v1h-2zM568 6h1v1h-1zM571 6h4v1h-4zM577 6h1v1h-1zM583 6h1v1h-1zM599 6h2v1h-2zM603 6h1v1h-1zM605 6h3v1h-3zM0 7h3v1h-3zM11 7h2v1h-2zM20 7h1v1h-1zM41 7h1v1h-1zM48 7h1v1h-1zM62 7h1v1h-1zM79 7h1v1h-1zM82 7h1v1h-1zM88 7h2v1h-2zM98 7h1v1h-1zM106 7h1v1h-1zM122 7h1v1h-1zM126 7h2v1h-2zM129 7h1v1h-1zM135 7h1v1h-1zM138 7h1v1h-1zM147 7h1v1h-1zM178 7h2v1h-2zM197 7h1v1h-1zM207 7h1v1h-1zM228 7h1v1h-1zM237 7h1v1h-1zM244 7h1v1h-1zM257 7h1v1h-1zM264 7h1v1h-1zM271 7h2v1h-2zM279 7h1v1h-1zM294 7h1v1h-1zM298 7h1v1h-1zM305 7h1v1h-1zM327 7h1v1h-1zM331 7h1v1h-1zM341 7h1v1h-1zM352 7h1v1h-1zM354 7h1v1h-1zM358 7h1v1h-1zM372 7h1v1h-1zM374 7h1v1h-1zM378 7h2v1h-2zM382 7h1v1h-1zM393 7h1v1h-1zM398 7h1v1h-1zM408 7h1v1h-1zM410 7h1v1h-1zM412 7h1v1h-1zM417 7h1v1h-1zM436 7h1v1h-1zM442 7h1v1h-1zM445 7h2v1h-2zM465 7h1v1h-1zM479 7h1v1h-1zM554 7h1v1h-1zM563 7h3v1h-3zM572 7h2v1h-2zM583 7h1v1h-1zM586 7h2v1h-2zM591 7h1v1h-1zM12 8h2v1h-2zM82 8h2v1h-2zM135 8h2v1h-2zM138 8h2v1h-2zM162 8h1v1h-1zM395 8h2v1h-2zM446 8h1v1h-1zM539 8h1v1h-1zM571 8h2v1h-2zM606 8h2v1h-2zM16 9h1v1h-1zM56 9h1v1h-1zM61 9h1v1h-1zM78 9h1v1h-1zM89 9h1v1h-1zM105 9h1v1h-1zM111 9h1v1h-1zM138 9h1v1h-1zM140 9h2v1h-2zM157 9h1v1h-1zM173 9h1v1h-1zM195 9h3v1h-3zM240 9h1v1h-1zM248 9h2v1h-2zM260 9h1v1h-1zM271 9h1v1h-1zM292 9h2v1h-2zM338 9h1v1h-1zM350 9h2v1h-2zM354 9h1v1h-1zM371 9h1v1h-1zM378 9h1v1h-1zM391 9h2v1h-2zM394 9h1v1h-1zM398 9h1v1h-1zM434 9h3v1h-3zM446 9h1v1h-1zM449 9h1v1h-1zM454 9h2v1h-2zM465 9h1v1h-1zM499 9h1v1h-1zM536 9h3v1h-3zM573 9h1v1h-1zM605 9h2v1h-2z'/><path fill='currentColor' fill-opacity='0.75' d='M477 2h1v1h-1zM10 3h2v1h-2zM28 3h1v1h-1zM36 3h2v1h-2zM40 3h1v1h-1zM42 3h2v1h-2zM45 3h1v1h-1zM47 3h1v1h-1zM50 3h1v1h-1zM52 3h1v1h-1zM59 3h1v1h-1zM76 3h1v1h-1zM116 3h1v1h-1zM118 3h1v1h-1zM121 3h1v1h-1zM143 3h1v1h-1zM155 3h1v1h-1zM224 3h1v1h-1zM269 3h1v1h-1zM275 3h1v1h-1zM278 3h1v1h-1zM281 3h2v1h-2zM285 3h3v1h-3zM291 3h1v1h-1zM297 3h1v1h-1zM299 3h2v1h-2zM302 3h1v1h-1zM304 3h1v1h-1zM307 3h1v1h-1zM309 3h1v1h-1zM357 3h2v1h-2zM406 3h2v1h-2zM424 3h1v1h-1zM441 3h2v1h-2zM471 3h1v1h-1zM473 3h1v1h-1zM477 3h1v1h-1zM581 3h1v1h-1zM589 3h2v1h-2zM9 4h1v1h-1zM27 4h1v1h-1zM35 4h1v1h-1zM40 4h1v1h-1zM43 4h1v1h-1zM45 4h1v1h-1zM48 4h1v1h-1zM50 4h1v1h-1zM59 4h1v1h-1zM66 4h2v1h-2zM74 4h2v1h-2zM116 4h1v1h-1zM118 4h2v1h-2zM121 4h1v1h-1zM123 4h2v1h-2zM130 4h3v1h-3zM143 4h1v1h-1zM145 4h1v1h-1zM154 4h1v1h-1zM223 4h1v1h-1zM235 4h1v1h-1zM269 4h1v1h-1zM276 4h2v1h-2zM280 4h1v1h-1zM283 4h1v1h-1zM291 4h1v1h-1zM297 4h1v1h-1zM300 4h1v1h-1zM302 4h1v1h-1zM305 4h1v1h-1zM307 4h1v1h-1zM356 4h1v1h-1zM405 4h1v1h-1zM409 4h1v1h-1zM411 4h1v1h-1zM413 4h3v1h-3zM418 4h2v1h-2zM421 4h3v1h-3zM425 4h1v1h-1zM440 4h1v1h-1zM471 4h1v1h-1zM475 4h1v1h-1zM477 4h1v1h-1zM480 4h2v1h-2zM579 4h1v1h-1zM591 4h1v1h-1zM10 5h1v1h-1zM27 5h1v1h-1zM36 5h1v1h-1zM40 5h4v1h-4zM45 5h1v1h-1zM48 5h1v1h-1zM50 5h2v1h-2zM59 5h1v1h-1zM64 5h1v1h-1zM75 5h1v1h-1zM90 5h1v1h-1zM96 5h1v1h-1zM102 5h1v1h-1zM116 5h1v1h-1zM118 5h3v1h-3zM122 5h1v1h-1zM125 5h1v1h-1zM129 5h1v1h-1zM143 5h1v1h-1zM145 5h1v1h-1zM154 5h1v1h-1zM166 5h1v1h-1zM176 5h2v1h-2zM184 5h1v1h-1zM193 5h2v1h-2zM202 5h1v1h-1zM211 5h1v1h-1zM223 5h1v1h-1zM235 5h1v1h-1zM252 5h1v1h-1zM259 5h2v1h-2zM262 5h2v1h-2zM269 5h1v1h-1zM276 5h2v1h-2zM280 5h3v1h-3zM286 5h1v1h-1zM291 5h1v1h-1zM297 5h4v1h-4zM302 5h1v1h-1zM305 5h1v1h-1zM307 5h2v1h-2zM329 5h1v1h-1zM334 5h1v1h-1zM345 5h1v1h-1zM357 5h1v1h-1zM364 5h2v1h-2zM382 5h1v1h-1zM405 5h2v1h-2zM413 5h1v1h-1zM415 5h1v1h-1zM417 5h1v1h-1zM421 5h1v1h-1zM424 5h1v1h-1zM429 5h1v1h-1zM441 5h1v1h-1zM466 5h1v1h-1zM471 5h2v1h-2zM475 5h1v1h-1zM477 5h1v1h-1zM479 5h3v1h-3zM514 5h1v1h-1zM533 5h1v1h-1zM542 5h2v1h-2zM556 5h1v1h-1zM574 5h1v1h-1zM580 5h1v1h-1zM590 5h2v1h-2zM596 5h2v1h-2zM602 5h1v1h-1zM5 6h1v1h-1zM18 6h1v1h-1zM20 6h1v1h-1zM28 6h1v1h-1zM31 6h1v1h-1zM33 6h1v1h-1zM40 6h1v1h-1zM45 6h1v1h-1zM48 6h1v1h-1zM50 6h1v1h-1zM59 6h1v1h-1zM62 6h1v1h-1zM64 6h1v1h-1zM66 6h1v1h-1zM71 6h1v1h-1zM76 6h1v1h-1zM79 6h1v1h-1zM86 6h1v1h-1zM91 6h1v1h-1zM106 6h1v1h-1zM112 6h1v1h-1zM122 6h1v1h-1zM125 6h1v1h-1zM129 6h1v1h-1zM143 6h1v1h-1zM146 6h2v1h-2zM155 6h1v1h-1zM158 6h1v1h-1zM163 6h1v1h-1zM171 6h1v1h-1zM174 6h1v1h-1zM182 6h2v1h-2zM186 6h1v1h-1zM192 6h1v1h-1zM194 6h1v1h-1zM199 6h1v1h-1zM207 6h1v1h-1zM215 6h1v1h-1zM219 6h1v1h-1zM224 6h1v1h-1zM228 6h1v1h-1zM233 6h1v1h-1zM236 6h2v1h-2zM241 6h1v1h-1zM247 6h1v1h-1zM255 6h1v1h-1zM264 6h1v1h-1zM269 6h1v1h-1zM276 6h2v1h-2zM280 6h1v1h-1zM287 6h1v1h-1zM291 6h1v1h-1zM297 6h1v1h-1zM302 6h1v1h-1zM305 6h1v1h-1zM307 6h1v1h-1zM315 6h1v1h-1zM318 6h1v1h-1zM324 6h1v1h-1zM339 6h1v1h-1zM349 6h1v1h-1zM362 6h1v1h-1zM366 6h2v1h-2zM372 6h1v1h-1zM382 6h1v1h-1zM390 6h1v1h-1zM393 6h2v1h-2zM396 6h1v1h-1zM401 6h1v1h-1zM405 6h1v1h-1zM413 6h1v1h-1zM415 6h1v1h-1zM417 6h1v1h-1zM421 6h1v1h-1zM424 6h1v1h-1zM433 6h1v1h-1zM438 6h1v1h-1zM449 6h1v1h-1zM453 6h1v1h-1zM462 6h1v1h-1zM467 6h1v1h-1zM471 6h1v1h-1zM475 6h1v1h-1zM477 6h1v1h-1zM479 6h1v1h-1zM485 6h1v1h-1zM497 6h1v1h-1zM500 6h1v1h-1zM505 6h1v1h-1zM507 6h1v1h-1zM509 6h1v1h-1zM511 6h1v1h-1zM513 6h1v1h-1zM520 6h1v1h-1zM523 6h1v1h-1zM529 6h1v1h-1zM537 6h1v1h-1zM540 6h1v1h-1zM544 6h2v1h-2zM551 6h1v1h-1zM553 6h1v1h-1zM561 6h1v1h-1zM563 6h1v1h-1zM575 6h1v1h-1zM581 6h1v1h-1zM591 6h1v1h-1zM595 6h1v1h-1zM597 6h1v1h-1zM609 6h1v1h-1zM611 6h1v1h-1zM5 7h5v1h-5zM15 7h4v1h-4zM24 7h1v1h-1zM26 7h1v1h-1zM29 7h3v1h-3zM34 7h1v1h-1zM40 7h1v1h-1zM45 7h1v1h-1zM50 7h1v1h-1zM56 7h1v1h-1zM59 7h3v1h-3zM64 7h4v1h-4zM73 7h2v1h-2zM76 7h3v1h-3zM86 7h1v1h-1zM92 7h4v1h-4zM97 7h1v1h-1zM103 7h1v1h-1zM105 7h1v1h-1zM110 7h3v1h-3zM117 7h1v1h-1zM120 7h1v1h-1zM123 7h2v1h-2zM130 7h3v1h-3zM140 7h2v1h-2zM143 7h3v1h-3zM151 7h1v1h-1zM153 7h1v1h-1zM156 7h3v1h-3zM163 7h4v1h-4zM171 7h4v1h-4zM180 7h1v1h-1zM187 7h2v1h-2zM192 7h1v1h-1zM194 7h3v1h-3zM199 7h2v1h-2zM203 7h4v1h-4zM212 7h1v1h-1zM214 7h2v1h-2zM219 7h2v1h-2zM222 7h1v1h-1zM224 7h1v1h-1zM230 7h6v1h-6zM239 7h3v1h-3zM247 7h5v1h-5zM255 7h1v1h-1zM261 7h1v1h-1zM269 7h1v1h-1zM275 7h1v1h-1zM278 7h1v1h-1zM280 7h1v1h-1zM286 7h2v1h-2zM291 7h3v1h-3zM297 7h1v1h-1zM302 7h1v1h-1zM307 7h1v1h-1zM313 7h1v1h-1zM315 7h3v1h-3zM319 7h1v1h-1zM321 7h4v1h-4zM328 7h2v1h-2zM332 7h1v1h-1zM335 7h5v1h-5zM346 7h1v1h-1zM348 7h4v1h-4zM362 7h2v1h-2zM365 7h2v1h-2zM368 7h4v1h-4zM380 7h2v1h-2zM386 7h1v1h-1zM388 7h1v1h-1zM390 7h3v1h-3zM394 7h1v1h-1zM396 7h1v1h-1zM400 7h2v1h-2zM406 7h2v1h-2zM409 7h1v1h-1zM411 7h1v1h-1zM414 7h2v1h-2zM418 7h2v1h-2zM421 7h1v1h-1zM424 7h2v1h-2zM430 7h1v1h-1zM432 7h4v1h-4zM438 7h3v1h-3zM449 7h1v1h-1zM451 7h5v1h-5zM457 7h1v1h-1zM459 7h4v1h-4zM471 7h1v1h-1zM475 7h1v1h-1zM477 7h1v1h-1zM480 7h2v1h-2zM485 7h2v1h-2zM488 7h2v1h-2zM493 7h1v1h-1zM495 7h1v1h-1zM497 7h6v1h-6zM505 7h6v1h-6zM518 7h1v1h-1zM520 7h3v1h-3zM524 7h1v1h-1zM526 7h4v1h-4zM534 7h1v1h-1zM536 7h2v1h-2zM540 7h2v1h-2zM543 7h2v1h-2zM546 7h2v1h-2zM551 7h1v1h-1zM553 7h1v1h-1zM555 7h2v1h-2zM559 7h3v1h-3zM568 7h1v1h-1zM576 7h4v1h-4zM581 7h1v1h-1zM589 7h2v1h-2zM595 7h1v1h-1zM597 7h2v1h-2zM600 7h1v1h-1zM603 7h1v1h-1zM608 7h2v1h-2zM611 7h1v1h-1zM16 8h1v1h-1zM56 8h1v1h-1zM59 8h1v1h-1zM86 8h1v1h-1zM91 8h1v1h-1zM163 8h1v1h-1zM171 8h1v1h-1zM177 8h1v1h-1zM199 8h1v1h-1zM260 8h1v1h-1zM271 8h1v1h-1zM354 8h1v1h-1zM378 8h1v1h-1zM398 8h1v1h-1zM413 8h1v1h-1zM438 8h1v1h-1zM449 8h1v1h-1zM467 8h1v1h-1zM540 8h1v1h-1zM568 8h1v1h-1zM575 8h1v1h-1zM13 9h1v1h-1zM83 9h1v1h-1zM90 9h1v1h-1zM136 9h1v1h-1zM162 9h1v1h-1zM170 9h1v1h-1zM176 9h1v1h-1zM198 9h1v1h-1zM259 9h1v1h-1zM270 9h1v1h-1zM353 9h1v1h-1zM377 9h1v1h-1zM395 9h1v1h-1zM397 9h1v1h-1zM413 9h1v1h-1zM437 9h1v1h-1zM466 9h1v1h-1zM539 9h1v1h-1zM569 9h1v1h-1zM571 9h1v1h-1zM574 9h1v1h-1z'/><path fill='currentColor' fill-opacity='1.00' d='M41 3h1v1h-1zM46 3h1v1h-1zM51 3h1v1h-1zM280 3h1v1h-1zM298 3h1v1h-1zM303 3h1v1h-1zM308 3h1v1h-1zM405 3h1v1h-1zM472 3h1v1h-1zM127 4h1v1h-1zM146 4h1v1h-1zM236 4h1v1h-1zM424 4h1v1h-1zM19 5h1v1h-1zM32 5h1v1h-1zM97 5h1v1h-1zM103 5h1v1h-1zM185 5h1v1h-1zM212 5h1v1h-1zM220 5h1v1h-1zM253 5h2v1h-2zM346 5h1v1h-1zM395 5h1v1h-1zM410 5h1v1h-1zM430 5h1v1h-1zM486 5h1v1h-1zM512 5h2v1h-2zM534 5h1v1h-1zM552 5h1v1h-1zM562 5h1v1h-1zM610 5h1v1h-1zM67 6h1v1h-1zM117 6h1v1h-1zM120 6h1v1h-1zM204 6h1v1h-1zM265 6h1v1h-1zM336 6h1v1h-1zM410 6h1v1h-1zM604 6h1v1h-1zM3 7h2v1h-2zM10 7h1v1h-1zM19 7h1v1h-1zM25 7h1v1h-1zM27 7h2v1h-2zM32 7h2v1h-2zM35 7h2v1h-2zM46 7h2v1h-2zM72 7h1v1h-1zM75 7h1v1h-1zM90 7h2v1h-2zM96 7h1v1h-1zM102 7h1v1h-1zM104 7h1v1h-1zM139 7h1v1h-1zM146 7h1v1h-1zM152 7h1v1h-1zM154 7h2v1h-2zM176 7h2v1h-2zM181 7h6v1h-6zM193 7h1v1h-1zM201 7h2v1h-2zM211 7h1v1h-1zM213 7h1v1h-1zM221 7h1v1h-1zM223 7h1v1h-1zM229 7h1v1h-1zM236 7h1v1h-1zM245 7h2v1h-2zM252 7h3v1h-3zM259 7h2v1h-2zM262 7h2v1h-2zM285 7h1v1h-1zM303 7h2v1h-2zM314 7h1v1h-1zM318 7h1v1h-1zM320 7h1v1h-1zM333 7h2v1h-2zM345 7h1v1h-1zM347 7h1v1h-1zM355 7h3v1h-3zM364 7h1v1h-1zM367 7h1v1h-1zM389 7h1v1h-1zM395 7h1v1h-1zM399 7h1v1h-1zM405 7h1v1h-1zM413 7h1v1h-1zM429 7h1v1h-1zM431 7h1v1h-1zM441 7h1v1h-1zM450 7h1v1h-1zM456 7h1v1h-1zM458 7h1v1h-1zM466 7h2v1h-2zM487 7h1v1h-1zM496 7h1v1h-1zM503 7h2v1h-2zM511 7h4v1h-4zM519 7h1v1h-1zM523 7h1v1h-1zM525 7h1v1h-1zM533 7h1v1h-1zM535 7h1v1h-1zM542 7h1v1h-1zM545 7h1v1h-1zM552 7h1v1h-1zM562 7h1v1h-1zM574 7h2v1h-2zM580 7h1v1h-1zM596 7h1v1h-1zM599 7h1v1h-1zM601 7h2v1h-2zM607 7h1v1h-1zM610 7h1v1h-1zM14 9h2v1h-2zM57 9h2v1h-2zM84 9h2v1h-2zM137 9h1v1h-1zM447 9h2v1h-2zM570 9h1v1h-1z'/></svg></div><div class="a" style="left:455px;top:96px;width:393px;height:222px;background:#1e1e1e"></div>
<div class="a" style="left:455px;top:96px;width:393px;height:217px;background:#161616"></div>
<div class="a" style="left:458px;top:99px;width:384px;height:208px;background:#fff"></div>
<div class="a" style="left:458px;top:150px;width:45px;height:157px;background:linear-gradient(#fbfbfb,#f3f3f3)"></div>
<div class="a" style="left:503px;top:150px;width:1px;height:157px;background:#d9d9d9"></div>
<div class="a" style="left:790px;top:150px;width:52px;height:157px;background:linear-gradient(#fbfbfb,#f0f0f0)"></div>
<div class="a" style="left:790px;top:150px;width:1px;height:157px;background:#e0e0e0"></div>
<div class="a" style="left:458px;top:149px;width:384px;height:1px;background:#dadada"></div>
<div class="a" style="left:606px;top:101.5px;white-space:nowrap;font-size:4.2px;line-height:5.2px;color:#a8a8a8;transform:scaleX(0.85);transform-origin:0 0;-webkit-text-stroke:.12px currentColor;">Bright Green Idea Documentary Memo - Word</div>
<div class="a" style="left:458px;top:109px;width:21px;height:8px;background:#2b579a"></div>
<div class="a" style="left:438.5px;top:110.5px;width:60px;text-align:center;white-space:nowrap;font-size:4.2px;line-height:5.2px;color:#fff;-webkit-text-stroke:.12px currentColor;"><span style="display:inline-block;transform:scaleX(0.9)">FILE</span></div>
<div class="a" style="left:461px;top:110.5px;width:60px;text-align:center;white-space:nowrap;font-size:4.2px;line-height:5.2px;color:#6a6a6a;-webkit-text-stroke:.12px currentColor;"><span style="display:inline-block;transform:scaleX(0.9)">HOME</span></div>
<div class="a" style="left:503px;top:108px;width:24px;height:9px;border:1.2px solid #c9434f"></div>
<div class="a" style="left:485px;top:110.5px;width:60px;text-align:center;white-space:nowrap;font-size:4.2px;line-height:5.2px;color:#2b579a;-webkit-text-stroke:.12px currentColor;"><span style="display:inline-block;transform:scaleX(0.9)">INSERT</span></div>
<div class="a" style="left:508px;top:110.5px;width:60px;text-align:center;white-space:nowrap;font-size:4.2px;line-height:5.2px;color:#6a6a6a;-webkit-text-stroke:.12px currentColor;"><span style="display:inline-block;transform:scaleX(0.9)">DESIGN</span></div>
<div class="a" style="left:539px;top:110.5px;width:60px;text-align:center;white-space:nowrap;font-size:4.2px;line-height:5.2px;color:#6a6a6a;-webkit-text-stroke:.12px currentColor;"><span style="display:inline-block;transform:scaleX(0.9)">PAGE LAYOUT</span></div>
<div class="a" style="left:575px;top:110.5px;width:60px;text-align:center;white-space:nowrap;font-size:4.2px;line-height:5.2px;color:#6a6a6a;-webkit-text-stroke:.12px currentColor;"><span style="display:inline-block;transform:scaleX(0.9)">REFERENCES</span></div>
<div class="a" style="left:606px;top:110.5px;width:60px;text-align:center;white-space:nowrap;font-size:4.2px;line-height:5.2px;color:#6a6a6a;-webkit-text-stroke:.12px currentColor;"><span style="display:inline-block;transform:scaleX(0.9)">MAILINGS</span></div>
<div class="a" style="left:634px;top:110.5px;width:60px;text-align:center;white-space:nowrap;font-size:4.2px;line-height:5.2px;color:#6a6a6a;-webkit-text-stroke:.12px currentColor;"><span style="display:inline-block;transform:scaleX(0.9)">REVIEW</span></div>
<div class="a" style="left:656px;top:110.5px;width:60px;text-align:center;white-space:nowrap;font-size:4.2px;line-height:5.2px;color:#6a6a6a;-webkit-text-stroke:.12px currentColor;"><span style="display:inline-block;transform:scaleX(0.9)">VIEW</span></div>
<div class="a" style="left:468px;top:120px;white-space:nowrap;font-size:4px;line-height:5px;color:#333;transform:scaleX(0.85);transform-origin:0 0;-webkit-text-stroke:.12px currentColor;">Cover Page<svg width="3" height="3" style="position:static;display:inline-block;vertical-align:0.3px;margin-left:0.5px"><path d="M0 0.6 h3 l-1.5 1.6z" fill="#777"/></svg></div>
<div class="a" style="left:468px;top:129px;white-space:nowrap;font-size:4px;line-height:5px;color:#333;transform:scaleX(0.85);transform-origin:0 0;-webkit-text-stroke:.12px currentColor;">Blank Page</div>
<div class="a" style="left:468px;top:137px;white-space:nowrap;font-size:4px;line-height:5px;color:#333;transform:scaleX(0.85);transform-origin:0 0;-webkit-text-stroke:.12px currentColor;">Page Break</div>
<div class="a" style="left:446px;top:145px;width:60px;text-align:center;white-space:nowrap;font-size:4px;line-height:5px;color:#666;-webkit-text-stroke:.12px currentColor;"><span style="display:inline-block;transform:scaleX(0.9)">Pages</span></div>
<div class="a" style="left:474.5px;top:132px;width:60px;text-align:center;white-space:nowrap;font-size:4px;line-height:5px;color:#333;-webkit-text-stroke:.12px currentColor;"><span style="display:inline-block;transform:scaleX(0.9)">Table</span></div>
<div class="a" style="left:474.5px;top:138px;width:60px;text-align:center;white-space:nowrap;font-size:3.5px;line-height:4.5px;color:#666;-webkit-text-stroke:.12px currentColor;"><span style="display:inline-block;transform:scaleX(0.9)"><svg width="3" height="3" style="position:static;display:inline-block;vertical-align:0.3px;margin-left:0.5px"><path d="M0 0.6 h3 l-1.5 1.6z" fill="#777"/></svg></span></div>
<div class="a" style="left:474.5px;top:145px;width:60px;text-align:center;white-space:nowrap;font-size:4px;line-height:5px;color:#666;-webkit-text-stroke:.12px currentColor;"><span style="display:inline-block;transform:scaleX(0.9)">Tables</span></div>
<div class="a" style="left:513px;top:119px;width:20px;height:20px;border:1.2px solid #c9434f"></div>
<div class="a" style="left:493px;top:132px;width:60px;text-align:center;white-space:nowrap;font-size:4px;line-height:5px;color:#333;-webkit-text-stroke:.12px currentColor;"><span style="display:inline-block;transform:scaleX(0.9)">Pictures</span></div>
<div class="a" style="left:512px;top:132px;width:60px;text-align:center;white-space:nowrap;font-size:4px;line-height:5px;color:#333;-webkit-text-stroke:.12px currentColor;"><span style="display:inline-block;transform:scaleX(0.9)">Online</span></div>
<div class="a" style="left:512px;top:138px;width:60px;text-align:center;white-space:nowrap;font-size:4px;line-height:5px;color:#333;-webkit-text-stroke:.12px currentColor;"><span style="display:inline-block;transform:scaleX(0.9)">Pictures</span></div>
<div class="a" style="left:529px;top:132px;width:60px;text-align:center;white-space:nowrap;font-size:4px;line-height:5px;color:#333;-webkit-text-stroke:.12px currentColor;"><span style="display:inline-block;transform:scaleX(0.9)">Shapes</span></div>
<div class="a" style="left:529px;top:138px;width:60px;text-align:center;white-space:nowrap;font-size:3.5px;line-height:4.5px;color:#666;-webkit-text-stroke:.12px currentColor;"><span style="display:inline-block;transform:scaleX(0.9)"><svg width="3" height="3" style="position:static;display:inline-block;vertical-align:0.3px;margin-left:0.5px"><path d="M0 0.6 h3 l-1.5 1.6z" fill="#777"/></svg></span></div>
<div class="a" style="left:574px;top:120px;white-space:nowrap;font-size:4px;line-height:5px;color:#333;transform:scaleX(0.85);transform-origin:0 0;-webkit-text-stroke:.12px currentColor;">SmartArt</div>
<div class="a" style="left:574px;top:129px;white-space:nowrap;font-size:4px;line-height:5px;color:#333;transform:scaleX(0.85);transform-origin:0 0;-webkit-text-stroke:.12px currentColor;">Chart</div>
<div class="a" style="left:574px;top:137px;white-space:nowrap;font-size:4px;line-height:5px;color:#333;transform:scaleX(0.85);transform-origin:0 0;-webkit-text-stroke:.12px currentColor;">Screenshot<svg width="3" height="3" style="position:static;display:inline-block;vertical-align:0.3px;margin-left:0.5px"><path d="M0 0.6 h3 l-1.5 1.6z" fill="#777"/></svg></div>
<div class="a" style="left:526px;top:145px;width:60px;text-align:center;white-space:nowrap;font-size:4px;line-height:5px;color:#666;-webkit-text-stroke:.12px currentColor;"><span style="display:inline-block;transform:scaleX(0.9)">Illustrations</span></div>
<div class="a" style="left:608px;top:124px;white-space:nowrap;font-size:4px;line-height:5px;color:#333;transform:scaleX(0.85);transform-origin:0 0;-webkit-text-stroke:.12px currentColor;">Store</div>
<div class="a" style="left:608px;top:133px;white-space:nowrap;font-size:4px;line-height:5px;color:#333;transform:scaleX(0.85);transform-origin:0 0;-webkit-text-stroke:.12px currentColor;">My Apps<svg width="3" height="3" style="position:static;display:inline-block;vertical-align:0.3px;margin-left:0.5px"><path d="M0 0.6 h3 l-1.5 1.6z" fill="#777"/></svg></div>
<div class="a" style="left:585px;top:145px;width:60px;text-align:center;white-space:nowrap;font-size:4px;line-height:5px;color:#666;-webkit-text-stroke:.12px currentColor;"><span style="display:inline-block;transform:scaleX(0.9)">Apps</span></div>
<div class="a" style="left:611px;top:132px;width:60px;text-align:center;white-space:nowrap;font-size:4px;line-height:5px;color:#999;-webkit-text-stroke:.12px currentColor;"><span style="display:inline-block;transform:scaleX(0.9)">Online</span></div>
<div class="a" style="left:611px;top:138px;width:60px;text-align:center;white-space:nowrap;font-size:4px;line-height:5px;color:#999;-webkit-text-stroke:.12px currentColor;"><span style="display:inline-block;transform:scaleX(0.9)">Video</span></div>
<div class="a" style="left:611px;top:145px;width:60px;text-align:center;white-space:nowrap;font-size:4px;line-height:5px;color:#666;-webkit-text-stroke:.12px currentColor;"><span style="display:inline-block;transform:scaleX(0.9)">Media</span></div>
<div class="a" style="left:629px;top:132px;width:60px;text-align:center;white-space:nowrap;font-size:4px;line-height:5px;color:#333;-webkit-text-stroke:.12px currentColor;"><span style="display:inline-block;transform:scaleX(0.9)">Links</span></div>
<div class="a" style="left:629px;top:138px;width:60px;text-align:center;white-space:nowrap;font-size:3.5px;line-height:4.5px;color:#666;-webkit-text-stroke:.12px currentColor;"><span style="display:inline-block;transform:scaleX(0.9)"><svg width="3" height="3" style="position:static;display:inline-block;vertical-align:0.3px;margin-left:0.5px"><path d="M0 0.6 h3 l-1.5 1.6z" fill="#777"/></svg></span></div>
<div class="a" style="left:646px;top:132px;width:60px;text-align:center;white-space:nowrap;font-size:4px;line-height:5px;color:#333;-webkit-text-stroke:.12px currentColor;"><span style="display:inline-block;transform:scaleX(0.9)">Comment</span></div>
<div class="a" style="left:648px;top:145px;width:60px;text-align:center;white-space:nowrap;font-size:4px;line-height:5px;color:#666;-webkit-text-stroke:.12px currentColor;"><span style="display:inline-block;transform:scaleX(0.9)">Comments</span></div>
<div class="a" style="left:700px;top:120px;white-space:nowrap;font-size:4px;line-height:5px;color:#333;transform:scaleX(0.85);transform-origin:0 0;-webkit-text-stroke:.12px currentColor;">Header<svg width="3" height="3" style="position:static;display:inline-block;vertical-align:0.3px;margin-left:0.5px"><path d="M0 0.6 h3 l-1.5 1.6z" fill="#777"/></svg></div>
<div class="a" style="left:700px;top:128.5px;white-space:nowrap;font-size:4px;line-height:5px;color:#333;transform:scaleX(0.85);transform-origin:0 0;-webkit-text-stroke:.12px currentColor;">Footer<svg width="3" height="3" style="position:static;display:inline-block;vertical-align:0.3px;margin-left:0.5px"><path d="M0 0.6 h3 l-1.5 1.6z" fill="#777"/></svg></div>
<div class="a" style="left:700px;top:137px;white-space:nowrap;font-size:4px;line-height:5px;color:#333;transform:scaleX(0.85);transform-origin:0 0;-webkit-text-stroke:.12px currentColor;">Page Number<svg width="3" height="3" style="position:static;display:inline-block;vertical-align:0.3px;margin-left:0.5px"><path d="M0 0.6 h3 l-1.5 1.6z" fill="#777"/></svg></div>
<div class="a" style="left:681px;top:145px;width:60px;text-align:center;white-space:nowrap;font-size:4px;line-height:5px;color:#666;-webkit-text-stroke:.12px currentColor;"><span style="display:inline-block;transform:scaleX(0.9)">Header &amp; Footer</span></div>
<div class="a" style="left:712px;top:132px;width:60px;text-align:center;white-space:nowrap;font-size:4px;line-height:5px;color:#333;-webkit-text-stroke:.12px currentColor;"><span style="display:inline-block;transform:scaleX(0.9)">Text</span></div>
<div class="a" style="left:712px;top:138px;width:60px;text-align:center;white-space:nowrap;font-size:4px;line-height:5px;color:#333;-webkit-text-stroke:.12px currentColor;"><span style="display:inline-block;transform:scaleX(0.9)">Box<svg width="3" height="3" style="position:static;display:inline-block;vertical-align:0.3px;margin-left:0.5px"><path d="M0 0.6 h3 l-1.5 1.6z" fill="#777"/></svg></span></div>
<div class="a" style="left:725px;top:145px;width:60px;text-align:center;white-space:nowrap;font-size:4px;line-height:5px;color:#666;-webkit-text-stroke:.12px currentColor;"><span style="display:inline-block;transform:scaleX(0.9)">Text</span></div>
<div class="a" style="left:784px;top:129px;white-space:nowrap;font-size:4px;line-height:5px;color:#333;transform:scaleX(0.85);transform-origin:0 0;-webkit-text-stroke:.12px currentColor;">Symbol<svg width="3" height="3" style="position:static;display:inline-block;vertical-align:0.3px;margin-left:0.5px"><path d="M0 0.6 h3 l-1.5 1.6z" fill="#777"/></svg></div>
<div class="a" style="left:760px;top:145px;width:60px;text-align:center;white-space:nowrap;font-size:4px;line-height:5px;color:#666;-webkit-text-stroke:.12px currentColor;"><span style="display:inline-block;transform:scaleX(0.9)">Symbols</span></div>
<div class="a" style="left:497px;top:119px;width:1px;height:29px;background:#e4e4e4"></div>
<div class="a" style="left:512px;top:119px;width:1px;height:29px;background:#e4e4e4"></div>
<div class="a" style="left:598px;top:119px;width:1px;height:29px;background:#e4e4e4"></div>
<div class="a" style="left:632px;top:119px;width:1px;height:29px;background:#e4e4e4"></div>
<div class="a" style="left:651px;top:119px;width:1px;height:29px;background:#e4e4e4"></div>
<div class="a" style="left:667px;top:119px;width:1px;height:29px;background:#e4e4e4"></div>
<div class="a" style="left:691px;top:119px;width:1px;height:29px;background:#e4e4e4"></div>
<div class="a" style="left:732px;top:119px;width:1px;height:29px;background:#e4e4e4"></div>
<div class="a" style="left:774px;top:119px;width:1px;height:29px;background:#e4e4e4"></div>
<div class="a" style="left:557px;top:177.3px;white-space:nowrap;font-family:'Liberation Serif',serif;font-weight:normal;font-size:5.8px;line-height:6px;color:#000;-webkit-text-stroke:.12px #000"><span class="fit" data-w="29" style="display:inline-block;transform-origin:0 0">t Green Idea</span></div>
<div class="a" style="left:557px;top:189.3px;white-space:nowrap;font-family:'Liberation Serif',serif;font-weight:normal;font-size:5.65px;line-height:6px;color:#000;-webkit-text-stroke:.12px #000"><span class="fit" data-w="184" style="display:inline-block;transform-origin:0 0">een Seeds Fund would provide funding for up to 100 citizen-led demonstration or</span></div>
<div class="a" style="left:557px;top:197px;white-space:nowrap;font-family:'Liberation Serif',serif;font-weight:normal;font-size:5.65px;line-height:6px;color:#000;-webkit-text-stroke:.12px #000"><span class="fit" data-w="184" style="display:inline-block;transform-origin:0 0">opment projects annually. The purpose is to stimulate bold experiments, test and</span></div>
<div class="a" style="left:557px;top:204.3px;white-space:nowrap;font-family:'Liberation Serif',serif;font-weight:normal;font-size:5.65px;line-height:6px;color:#000;-webkit-text-stroke:.12px #000"><span class="fit" data-w="177" style="display:inline-block;transform-origin:0 0">ate new ideas, and tap into the tremendous energy and creativity of Vancouver</span></div>
<div class="a" style="left:557px;top:211.5px;white-space:nowrap;font-family:'Liberation Serif',serif;font-weight:normal;font-size:5.65px;line-height:6px;color:#000;-webkit-text-stroke:.12px #000"><span class="fit" data-w="15" style="display:inline-block;transform-origin:0 0">ens.</span></div>
<div class="a" style="left:458px;top:307px;width:384px;height:5px;background:#2b579a"></div>
<svg style="left:458px;top:307px" width="384" height="6"><rect x="282" y="1.8" width="4" height="2.2" fill="#cfd9ea"/><rect x="295" y="1.8" width="4" height="2.2" fill="#cfd9ea"/><rect x="308" y="1.8" width="4" height="2.2" fill="#cfd9ea"/><rect x="318" y="2.6" width="44" height="0.7" fill="#b8c8e0"/><rect x="339.5" y="1.2" width="1.5" height="3" fill="#fff"/><path d="M361 3 h3 M362.5 1.5 v3" stroke="#cfd9ea" stroke-width="0.6"/><rect x="366" y="1.8" width="10" height="2" fill="#cfd9ea"/></svg>
<svg style="left:0;top:0" width="900" height="320">
 <rect x="461.5" y="101" width="6.5" height="5.5" fill="#2b579a"/><rect x="462.5" y="102.5" width="3" height="2.5" fill="#fff"/>
 <rect x="472" y="101" width="5" height="5.5" fill="#7a4a6e"/><rect x="473" y="102" width="3" height="1.5" fill="#fff"/>
 <path d="M483 103 h5 a2 2 0 0 1 0 3.5" stroke="#555" stroke-width="0.9" fill="none"/><path d="M489.5 104 l1 1 l1 -1" fill="#777"/>
 <path d="M499 102 a2.5 2.5 0 1 1 -2.5 1.5" stroke="#aaa" stroke-width="0.8" fill="none"/>
 <path d="M505.5 104 l1 1 l1 -1" fill="#888"/>
 <text x="794" y="105.5" font-size="4.5" fill="#c4c4c4" font-family="Liberation Sans">?</text>
 <rect x="803" y="101.5" width="4.5" height="3.5" fill="none" stroke="#c8c8c8" stroke-width="0.5"/>
 <line x1="814" y1="104" x2="818" y2="104" stroke="#bbb" stroke-width="0.6"/>
 <rect x="824.5" y="101.5" width="4" height="4" fill="none" stroke="#c8c8c8" stroke-width="0.5"/>
 <path d="M834.5 101.5 l3.5 3.5 M838 101.5 l-3.5 3.5" stroke="#c0c0c0" stroke-width="0.6"/>
 <!-- pages icons -->
 <rect x="462" y="120" width="4.5" height="4.5" fill="#2f6f4f"/><rect x="463" y="121" width="2.5" height="2.5" fill="#6aa"/>
 <rect x="462" y="128.5" width="4" height="5" fill="none" stroke="#888" stroke-width="0.5"/>
 <path d="M460.5 138.5 h7 M461 137 v3 M467 137 v3" stroke="#777" stroke-width="0.6"/>
 <!-- table -->
 <rect x="499.5" y="120.5" width="10.5" height="9.5" fill="#f4f4f4" stroke="#777" stroke-width="0.6"/>
 <rect x="499.5" y="120.5" width="10.5" height="2" fill="#555"/>
 <path d="M499.5 125 h10.5 M499.5 127.5 h10.5 M503 122.5 v7.5 M506.5 122.5 v7.5" stroke="#aaa" stroke-width="0.5"/>
 <!-- pictures -->
 <rect x="518" y="122" width="10" height="8" fill="#dbe9f5" stroke="#8ab" stroke-width="0.5"/>
 <path d="M518 130 l3 -3 l2 2 l2 -2 l3 3z" fill="#5b8fc7"/>
 <rect x="521" y="126" width="6" height="4" fill="#fff" stroke="#5b8fc7" stroke-width="0.5"/>
 <!-- online pictures -->
 <rect x="537" y="121.5" width="9" height="8" fill="#eef3f8" stroke="#9ab" stroke-width="0.5"/>
 <path d="M537 129.5 l3 -3 l2 2 l2 -2 l2 2z" fill="#8fb3d6"/>
 <circle cx="546" cy="128.5" r="2.8" fill="#6a9bd0"/>
 <!-- shapes -->
 <circle cx="561" cy="124.5" r="3.5" fill="none" stroke="#8a8a8a" stroke-width="0.7"/>
 <rect x="554" y="125" width="5" height="5" fill="none" stroke="#8a8a8a" stroke-width="0.7" transform="rotate(45 556.5 127.5)"/>
 <!-- smartart, chart, screenshot small -->
 <rect x="569" y="119.5" width="4" height="4" fill="none" stroke="#6b6b6b" stroke-width="0.6"/>
 <rect x="569" y="128.5" width="4" height="4" fill="#7fa5d6"/><rect x="570" y="129.5" width="1" height="3" fill="#fff"/>
 <text x="568" y="141" font-size="4" fill="#555" font-family="Liberation Sans">Aa</text>
 <!-- store, my apps -->
 <rect x="601" y="123.5" width="5.5" height="5" fill="#e0432f"/>
 <rect x="601" y="132.5" width="5.5" height="5" fill="#2b6bb5"/>
 <path d="M629 134 l1.5 1.5 l1.5 -1.5" stroke="#888" stroke-width="0.5" fill="none"/>
 <!-- online video gray -->
 <rect x="637" y="121" width="9" height="8" fill="none" stroke="#aaa" stroke-width="0.6"/>
 <circle cx="645" cy="128.5" r="2" fill="none" stroke="#aaa" stroke-width="0.6"/>
 <!-- links -->
 <rect x="655" y="120.5" width="8" height="9" fill="#e7eef6" stroke="#9ab" stroke-width="0.5"/>
 <rect x="656.5" y="124" width="4" height="3" fill="#5b8fc7"/>
 <!-- comment -->
 <path d="M672.5 121.5 h7 l3 3 v7 h-10z" fill="#fbfbf4" stroke="#8a8a8a" stroke-width="0.6"/>
 <!-- header footer -->
 <rect x="694" y="119.5" width="4" height="5" fill="none" stroke="#777" stroke-width="0.5"/>
 <rect x="694" y="127.5" width="4" height="5" fill="none" stroke="#777" stroke-width="0.5"/>
 <rect x="694" y="135.5" width="4" height="5" fill="none" stroke="#777" stroke-width="0.5"/>
 <!-- text box -->
 <rect x="737" y="121" width="11" height="9.5" fill="#f7f7f7" stroke="#888" stroke-width="0.6"/>
 <path d="M740 128 l2.5 -5.5 l2.5 5.5" stroke="#777" stroke-width="0.5" fill="none"/>
 <!-- text small icons -->
 <rect x="750.5" y="120.5" width="3" height="4" fill="none" stroke="#777" stroke-width="0.5"/>
 <rect x="757.5" y="120.5" width="3.5" height="4" fill="none" stroke="#777" stroke-width="0.5"/>
 <path d="M750 129 l3 -1.5 v3z" fill="#3b6ab0"/>
 <rect x="757.5" y="127.5" width="3.5" height="4" fill="none" stroke="#777" stroke-width="0.5"/>
 <rect x="750.5" y="135.5" width="2.5" height="4" fill="#aac"/>
 <rect x="757.5" y="135.5" width="4" height="4" fill="none" stroke="#456" stroke-width="0.6"/>
 <path d="M755 122.5 h1.2 M755 129.5 h1.2 M755 137.5 h1.2" stroke="#999" stroke-width="0.4"/>
 <!-- symbol -->
 <rect x="778.5" y="127.5" width="3.5" height="4" fill="none" stroke="#777" stroke-width="0.5"/>
 <!-- MAG logo -->
 <rect x="781.5" y="118" width="18.5" height="9" fill="#fff" stroke="#b9cde8" stroke-width="0.7"/>
 <text x="783" y="125.3" font-size="6.5" font-weight="bold" font-family="Liberation Sans" fill="#e83a55" textLength="5.5" lengthAdjust="spacingAndGlyphs">M</text>
 <text x="788.5" y="125.3" font-size="6.5" font-weight="bold" font-family="Liberation Sans" fill="#8a5ad0" textLength="4.8" lengthAdjust="spacingAndGlyphs">A</text>
 <text x="793.3" y="125.3" font-size="6.5" font-weight="bold" font-family="Liberation Sans" fill="#2f86d8" textLength="5" lengthAdjust="spacingAndGlyphs">G</text>
 <!-- uk19 in screenshot -->
 <path d="M802.5 114.3 V121.5 A3.25 3.25 0 0 0 809 121.5 V114.3" fill="none" stroke="#34495e" stroke-width="2.4" stroke-linecap="round"/>
 <path d="M812.3 114.3 V121.5 A3.25 3.25 0 0 0 818.8 121.6 Q818.8 119.2 815.8 119.6 L821.2 114" fill="none" stroke="#34495e" stroke-width="2.4" stroke-linecap="round" stroke-linejoin="round"/>
 <path d="M825.2 114.3 V125.3" fill="none" stroke="#e8801f" stroke-width="2.4" stroke-linecap="round"/>
 <circle cx="832.4" cy="118" r="3.5" fill="none" stroke="#e8801f" stroke-width="2.4"/>
 <path d="M835.9 118 V125.3" fill="none" stroke="#e8801f" stroke-width="2.4" stroke-linecap="round"/>
 <text x="831" y="110" font-size="3" fill="#777" font-family="Liberation Sans">mag</text>
 <path d="M836 147 l1.2 -1.2 l1.2 1.2" stroke="#666" stroke-width="0.5" fill="none"/>
</svg>
<svg style="left:557px;top:222px" width="95" height="79.5" viewBox="0 0 95 79.5">
 <defs>
  <linearGradient id="sky" x1="0" y1="0" x2="0" y2="34" gradientUnits="userSpaceOnUse"><stop offset="0" stop-color="#2a68c0"/><stop offset="0.45" stop-color="#5b95d6"/><stop offset="0.8" stop-color="#a9c6e4"/><stop offset="1" stop-color="#d2dbe0"/></linearGradient>
  <linearGradient id="gr" x1="0" y1="30" x2="0" y2="79.5" gradientUnits="userSpaceOnUse"><stop offset="0" stop-color="#86381a"/><stop offset="0.4" stop-color="#743014"/><stop offset="0.7" stop-color="#5a220c"/><stop offset="1" stop-color="#361205"/></linearGradient>
  <linearGradient id="bt" x1="40" y1="0" x2="62" y2="0" gradientUnits="userSpaceOnUse"><stop offset="0" stop-color="#c86530"/><stop offset="0.55" stop-color="#e08448"/><stop offset="1" stop-color="#b9521f"/></linearGradient>
  <linearGradient id="sl" x1="0" y1="42" x2="0" y2="62" gradientUnits="userSpaceOnUse"><stop offset="0" stop-color="#b8561f"/><stop offset="1" stop-color="#7e3012"/></linearGradient>
 </defs>
 <rect width="95" height="79.5" fill="url(#sky)"/>
 <path d="M0 35 L8 34.5 L9 30 L12 30 L13 34.5 L25 34 L38 33 L40 45 L0 45z" fill="#94401c"/>
 <path d="M60 33 L64 32 L95 32 V45 L60 45z" fill="#8e3c1a"/>
 <path d="M0 38 L95 37 V79.5 H0z" fill="url(#gr)"/>
 <path d="M40 43 L40.5 27 L43 24.5 L59 24.5 L61 27 L62 43z" fill="url(#bt)"/>
 <path d="M46 26 v16 M51 26 v16 M56 26 v16" stroke="#b55a26" stroke-width="0.7" opacity="0.5"/>
 <path d="M38 42 L62 42 L70 48 L84 55 L95 58 V62 L60 62 L22 60 L6 58 L24 50z" fill="url(#sl)"/>
 <path d="M39 42 L33 47 L22 52 L10 57 L16 58 L30 51 L42 43z" fill="#3a1507" opacity="0.85"/>
 <path d="M16 37 l1.5 -2 l1.5 1 l-0.5 5z" fill="#3a1a0e"/>
 <path d="M66 35 L90 35 V37 L66 37z" fill="#6e2e14" opacity="0.5"/>
 <path d="M0 62 L40 63 L95 62 V79.5 H0z" fill="#6a2810" opacity="0.55"/>
 <path d="M0 67 Q20 64 40 69 T95 68" stroke="#4a1a08" stroke-width="1.2" fill="none" opacity="0.45"/>
 <path d="M0 73 Q25 70 50 75 T95 74" stroke="#3a1406" stroke-width="1.5" fill="none" opacity="0.45"/>
 <path d="M64 50 Q75 48 90 52" stroke="#7a3010" stroke-width="1" fill="none" opacity="0.5"/>
 <ellipse cx="15" cy="66" rx="10" ry="2" fill="#2e0f04" opacity="0.5"/>
 <ellipse cx="70" cy="70" rx="14" ry="2.5" fill="#2e0f04" opacity="0.45"/>
 <ellipse cx="40" cy="76" rx="16" ry="2" fill="#2a0e04" opacity="0.5"/>
 <ellipse cx="85" cy="62" rx="8" ry="1.5" fill="#3a1406" opacity="0.5"/>
 <path d="M44 42 L42 52 M50 42 L49 50 M56 42 L58 52" stroke="#8a3a14" stroke-width="1" opacity="0.5"/>
</svg><div class="a" style="left:343px;top:170px;width:214px;height:151px;background:#262626;border:1px solid #555;border-top-color:#3a3a3a;border-radius:5px"></div>
<div class="a" style="left:343px;top:289px;width:214px;height:1px;background:#3a3a3a"></div>
<svg style="left:544px;top:173px" width="10" height="10"><path d="M2 2 L8 8 M8 2 L2 8" stroke="#e6e6e6" stroke-width="1"/></svg>
<div class="a" style="left:356px;top:187.5px;white-space:nowrap;font-size:10.5px;line-height:12.5px;color:#ececec;transform:scaleX(0.86);transform-origin:0 0;-webkit-text-stroke:.2px currentColor;">Save this file</div>
<div class="a" style="left:356px;top:209px;white-space:nowrap;font-size:6px;line-height:8px;color:#ececec;transform:scaleX(0.9);transform-origin:0 0;-webkit-text-stroke:.2px currentColor;">File name</div>
<div class="a" style="left:356px;top:218px;width:189px;height:14px;background:#2f2f2f;border:1.3px solid #e8e8e8;border-radius:1px"></div>
<div class="a" style="left:502px;top:221.5px;width:19.5px;height:7px;background:#2163c4"></div>
<div class='a' style='left:503px;top:220.5px;width:18px;height:8.5px;color:#fff'><svg width='18' height='8.5' viewBox='0 0 23 10' preserveAspectRatio='none' style='display:block'><path fill='currentColor' fill-opacity='0.25' d='M0 1h1v1h-1zM11 1h1v1h-1zM0 2h1v1h-1zM11 2h1v1h-1zM1 3h1v1h-1zM6 3h1v1h-1zM11 3h1v1h-1zM15 3h1v1h-1zM22 3h1v1h-1zM1 4h1v1h-1zM7 4h1v1h-1zM9 4h1v1h-1zM11 4h2v1h-2zM16 4h1v1h-1zM18 4h1v1h-1zM22 4h1v1h-1zM1 5h1v1h-1zM22 5h1v1h-1zM16 6h1v1h-1zM18 6h1v1h-1z'/><path fill='currentColor' fill-opacity='0.50' d='M10 1h1v1h-1zM1 2h1v1h-1zM10 2h1v1h-1zM10 3h1v1h-1zM12 3h1v1h-1zM14 3h1v1h-1zM10 4h1v1h-1zM14 4h1v1h-1zM17 4h1v1h-1zM19 4h3v1h-3zM6 5h1v1h-1zM14 5h1v1h-1zM17 5h1v1h-1zM17 7h1v1h-1z'/><path fill='currentColor' fill-opacity='0.75' d='M1 1h2v1h-2zM2 2h1v1h-1zM2 3h1v1h-1zM7 3h2v1h-2zM13 3h1v1h-1zM20 3h2v1h-2zM2 4h1v1h-1zM6 4h1v1h-1zM8 4h1v1h-1zM2 5h1v1h-1zM7 5h6v1h-6zM18 5h2v1h-2zM21 5h1v1h-1zM17 6h1v1h-1zM16 7h1v1h-1z'/><path fill='currentColor' fill-opacity='1.00' d='M15 4h1v1h-1zM13 5h1v1h-1zM20 5h1v1h-1z'/></svg></div>
<div class="a" style="left:527.5px;top:222px;white-space:nowrap;font-size:6px;line-height:8px;color:#e8e8e8;transform:scaleX(0.9);transform-origin:0 0;-webkit-text-stroke:.2px currentColor;">docx</div>
<div class="a" style="left:356px;top:246px;white-space:nowrap;font-size:6.2px;line-height:8.2px;color:#ececec;transform:scaleX(0.9);transform-origin:0 0;-webkit-text-stroke:.2px currentColor;">Choose a Location</div>
<div class="a" style="left:356px;top:255px;width:189px;height:23px;background:#2e2e2e;border:1px solid #3f3f3f;border-radius:2px"></div>
<svg style="left:360px;top:258px" width="16" height="16"><path d="M1.5 3 h4.5 l1.5 1.5 h6.5 v9 h-12.5z" fill="#dcb25e"/><path d="M1.5 5.5 h12.5 v8 h-12.5z" fill="#f2cf7e"/></svg>
<div class="a" style="left:382px;top:259px;white-space:nowrap;font-size:7.5px;line-height:9.5px;color:#ececec;transform:scaleX(0.88);transform-origin:0 0;-webkit-text-stroke:.2px currentColor;">Documents</div>
<div class="a" style="left:382px;top:269px;white-space:nowrap;font-size:6.2px;line-height:8.2px;color:#dedede;transform:scaleX(0.88);transform-origin:0 0;-webkit-text-stroke:.2px currentColor;">OneDrive - Personal</div>
<svg style="left:535px;top:264px" width="8" height="6"><path d="M1.3 1.5 h4.4 l-2.2 2.2z" fill="#d0d0d0"/></svg>
<div class="a" style="left:357.5px;top:301.5px;white-space:nowrap;font-size:6.2px;line-height:8.2px;color:#7dbaf0;transform:scaleX(0.9);transform-origin:0 0;-webkit-text-stroke:.2px currentColor;text-decoration:underline">More options...</div>
<div class="a" style="left:473px;top:298px;width:34px;height:12px;background:#2d6ac2;border-radius:2px"></div>
<div class="a" style="left:473px;top:298px;width:34px;height:12px;text-align:center;font-size:6px;line-height:14px;color:#fff;white-space:nowrap;-webkit-text-stroke:.2px #fff"><span style="display:inline-block;transform:scaleX(.9)">Save</span></div>
<div class="a" style="left:511px;top:298px;width:34px;height:12px;background:#333;border:1px solid #454545;border-radius:2px"></div>
<div class="a" style="left:511px;top:298px;width:34px;height:12px;text-align:center;font-size:6px;line-height:14px;color:#f0f0f0;white-space:nowrap;-webkit-text-stroke:.2px #f0f0f0"><span style="display:inline-block;transform:scaleX(.9)">Cancel</span></div><div class="a" style="left:0;top:481px;width:900px;height:12px;background:#2b2d33"></div>
<div class="a" style="left:0;top:481px;width:900px;height:1px;background:#303236"></div>
<div class="a" style="left:0;top:493px;width:900px;height:1px;background:#3a3a3a"></div>
<div class="a" style="left:0;top:494px;width:900px;height:6px;background:linear-gradient(90deg,#30241b,#2e2519 50%,#2a2a1d)"></div>
<div class="a" style="left:25px;top:497px;width:95px;height:3px;background:#4a3a30;border-radius:2px 2px 0 0"></div>
<svg style="left:0;top:494px" width="900" height="6">
 <circle cx="244.5" cy="6" r="3" fill="#7f8fe6"/>
 <circle cx="265" cy="6" r="3" fill="#a02fd8"/>
 <rect x="365" y="4" width="8" height="2" fill="#5a4a3e"/>
 <rect x="430" y="4" width="8" height="2" fill="#8a8070"/><rect x="487" y="4" width="8" height="2" fill="#5a5040"/><rect x="548" y="4" width="10" height="2" fill="#4a4438"/>
</svg>
<div class="t" style="left:0;top:486.5px;color:#e8e8e8">7 words</div>
<svg style="left:0;top:481px" width="900" height="13">
 <rect x="28.5" y="4" width="4.5" height="5" fill="none" stroke="#ddd" stroke-width="0.8"/>
 <path d="M33.5 6.5 h2.5 v3" fill="none" stroke="#ddd" stroke-width="0.8"/>
 <path d="M87 5 a3 3 0 1 1 0.5 3.5" fill="none" stroke="#ddd" stroke-width="0.9"/>
 <path d="M85 4 l1.5 1.2 l0.7 -1.8" fill="none" stroke="#ddd" stroke-width="0.8"/>
 <rect x="772" y="4" width="6" height="5" fill="none" stroke="#ddd" stroke-width="0.8"/>
 <line x1="775" y1="4" x2="775" y2="9" stroke="#ddd" stroke-width="0.8"/>
 <rect x="806" y="1.5" width="19" height="10" fill="#4a4b4f"/>
 <rect x="792" y="4" width="6" height="5.5" fill="none" stroke="#ddd" stroke-width="0.8"/>
 <rect x="812.5" y="3.5" width="6" height="6" fill="none" stroke="#ddd" stroke-width="0.8"/>
 <line x1="826" y1="7" x2="829" y2="7" stroke="#ccc" stroke-width="0.8"/>
 <rect x="831" y="6.5" width="50" height="1.2" fill="#d8d8d8"/>
 <rect x="856" y="3.5" width="2.2" height="6.5" fill="#f2f2f2"/>
 <path d="M883 7 h4 M885 5 v4" stroke="#ccc" stroke-width="0.8"/>
</svg>
<div class="t" style="left:43px;top:486.5px;color:#e8e8e8">Persian (Iran)</div>
<div class="t" style="left:92px;top:486.5px;color:#e8e8e8">Accessibility: Good to go</div>
<div class="t" style="left:890px;top:486.5px;color:#e0e0e0">100%</div>

</body></html>
